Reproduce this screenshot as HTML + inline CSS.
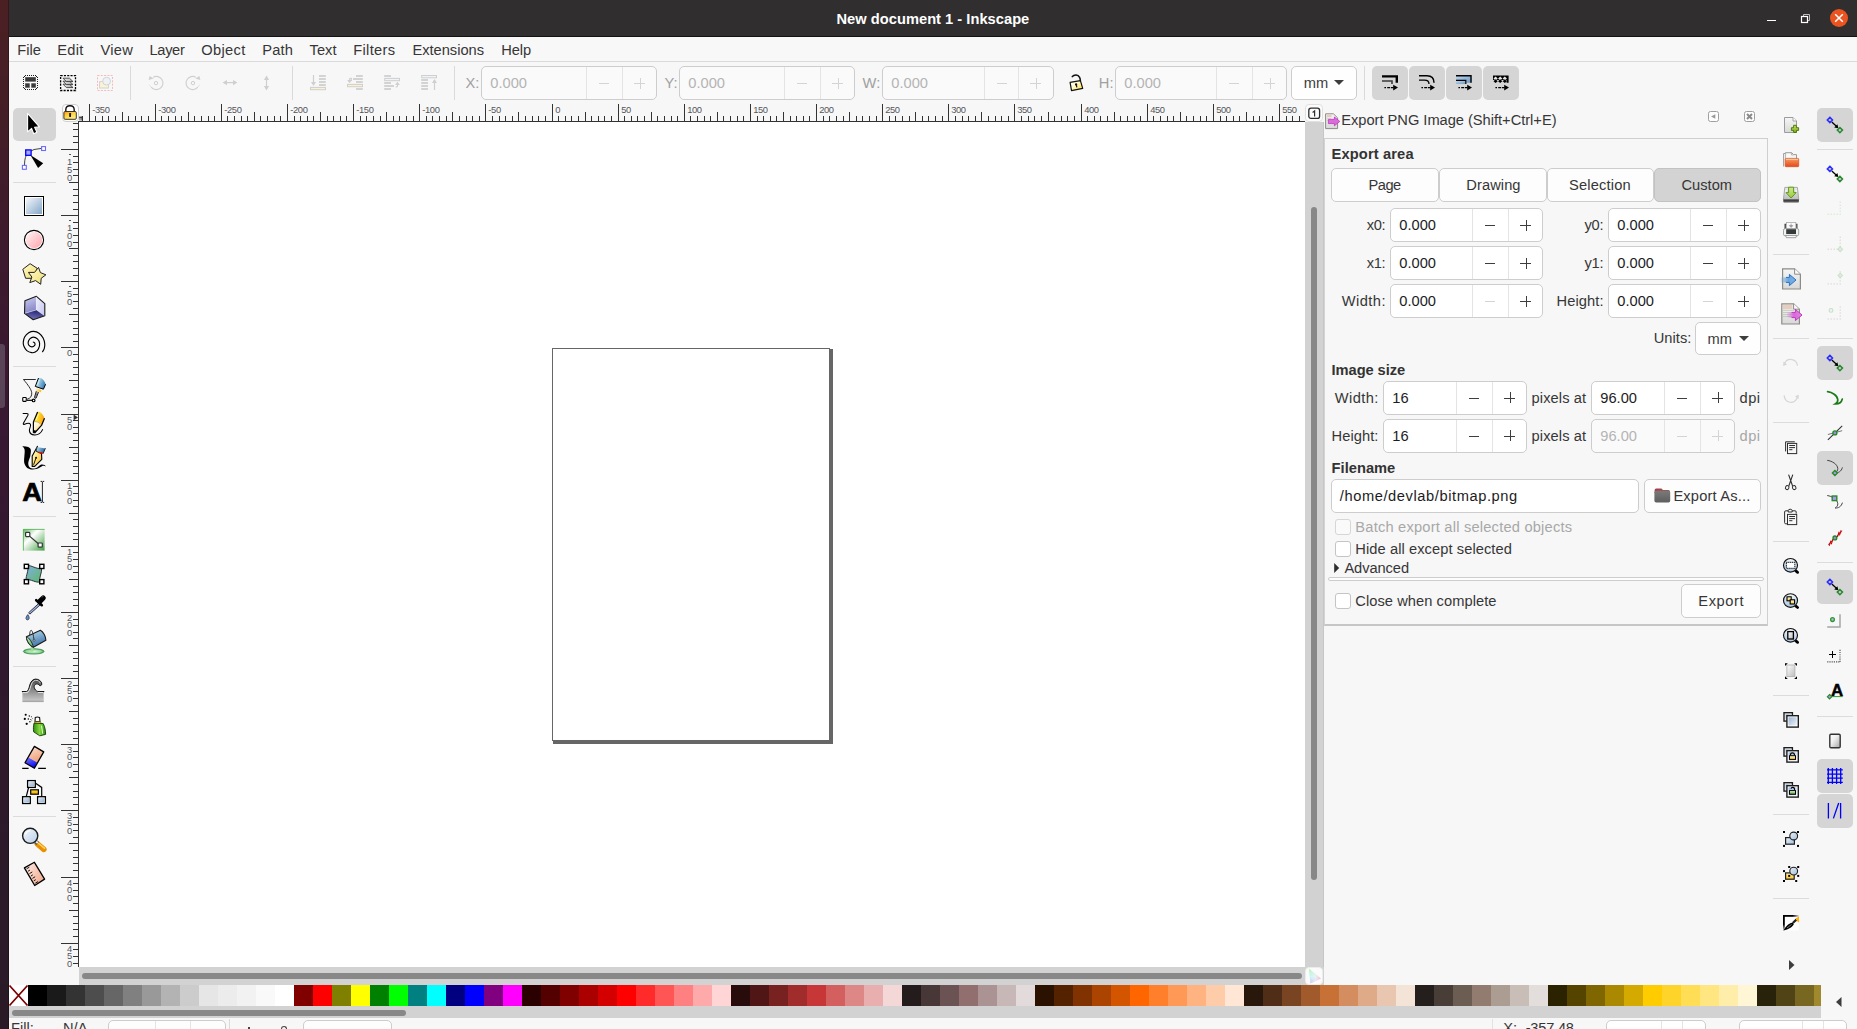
<!DOCTYPE html><html><head><meta charset="utf-8"><title>New document 1 - Inkscape</title><style>
html,body{margin:0;padding:0}
body{width:1857px;height:1029px;position:relative;overflow:hidden;background:#f7f7f7;font-family:"Liberation Sans", sans-serif;color:#363636}
div,svg,span{position:absolute;box-sizing:border-box}
span{white-space:nowrap;display:block}
svg{overflow:visible}
svg text{font-family:"Liberation Sans", sans-serif}
</style></head><body><div style="left:0;top:0;width:1857px;height:1029px;overflow:hidden"><div style="left:0px;top:0px;width:9px;height:1029px;background:linear-gradient(180deg,#4b2023 0px,#451e26 100px,#3d1a2d 250px,#381832 420px,#30182e 650px,#2b1a28 900px,#2a1a26 1029px)"></div><div style="left:8px;top:0px;width:1px;height:1029px;background:rgba(0,0,0,.28)"></div><div style="left:0px;top:344px;width:5px;height:64px;background:#594356;border-radius:0 3px 3px 0"></div><div style="left:9px;top:0px;width:1848px;height:36px;background:#302e2f"></div><div style="left:9px;top:36px;width:1848px;height:1px;background:#141313"></div><span style="top:9.60px;font-size:14.67px;line-height:19px;color:#ffffff;font-weight:700;letter-spacing:0.023px;left:836.50px;">New document 1 - Inkscape</span><div style="left:1767px;top:20px;width:9px;height:1.3px;background:#fff"></div><svg style="left:1798px;top:12px;" width="14" height="12" viewBox="0 0 14 12"><path d="M5.5 4.5V2.5H11.5V8.5H9.5" fill="none" stroke="#bdbdbd" stroke-width="1"/><rect x="3.5" y="4.5" width="6" height="6" fill="none" stroke="#fff" stroke-width="1.2"/></svg><div style="left:1829.8px;top:8.8px;width:18.6px;height:18.6px;background:#e95420;border-radius:50%"></div><svg style="left:1830px;top:9px;" width="18" height="18" viewBox="0 0 18 18"><path d="M5.2 5.2L12.8 12.8M12.8 5.2L5.2 12.8" stroke="#fff" stroke-width="1.5" fill="none"/></svg><div style="left:9px;top:37px;width:1848px;height:25px;background:#f8f8f8;border-bottom:1px solid #dadada"></div><span style="top:41.00px;font-size:14.67px;line-height:19px;color:#363636;letter-spacing:0.044px;left:17.20px;">File</span><span style="top:41.00px;font-size:14.67px;line-height:19px;color:#363636;letter-spacing:0.309px;left:57.20px;">Edit</span><span style="top:41.00px;font-size:14.67px;line-height:19px;color:#363636;letter-spacing:0.246px;left:100.50px;">View</span><span style="top:41.00px;font-size:14.67px;line-height:19px;color:#363636;letter-spacing:-0.374px;left:149.60px;">Layer</span><span style="top:41.00px;font-size:14.67px;line-height:19px;color:#363636;letter-spacing:0.323px;left:201.30px;">Object</span><span style="top:41.00px;font-size:14.67px;line-height:19px;color:#363636;letter-spacing:0.136px;left:262.30px;">Path</span><span style="top:41.00px;font-size:14.67px;line-height:19px;color:#363636;letter-spacing:0.052px;left:309.50px;">Text</span><span style="top:41.00px;font-size:14.67px;line-height:19px;color:#363636;letter-spacing:0.299px;left:353.30px;">Filters</span><span style="top:41.00px;font-size:14.67px;line-height:19px;color:#363636;left:412.40px;">Extensions</span><span style="top:41.00px;font-size:14.67px;line-height:19px;color:#363636;letter-spacing:-0.039px;left:501.20px;">Help</span><div style="left:130px;top:66px;width:1px;height:34px;background:#dadada"></div><div style="left:292px;top:66px;width:1px;height:34px;background:#dadada"></div><div style="left:454px;top:66px;width:1px;height:34px;background:#dadada"></div><div style="left:1364px;top:66px;width:1px;height:34px;background:#dadada"></div><span style="top:74.00px;font-size:14.67px;line-height:19px;color:#a0a0a0;left:465.60px;">X:</span><div style="left:481px;top:66px;width:176px;height:34px;background:#fafafa;border:1px solid #cdcdcd;border-radius:5px"></div><div style="left:586px;top:67px;width:1px;height:32px;background:#e4e4e4"></div><div style="left:622px;top:67px;width:1px;height:32px;background:#e4e4e4"></div><span style="top:74.00px;font-size:14.67px;line-height:19px;color:#b4b4b4;left:490.30px;">0.000</span><div style="left:599px;top:83px;width:10px;height:1px;background:#d4d4d4"></div><div style="left:634px;top:83px;width:11px;height:1px;background:#d4d4d4"></div><div style="left:640px;top:78px;width:1px;height:11px;background:#d4d4d4"></div><span style="top:74.00px;font-size:14.67px;line-height:19px;color:#a0a0a0;left:664.60px;">Y:</span><div style="left:679px;top:66px;width:176px;height:34px;background:#fafafa;border:1px solid #cdcdcd;border-radius:5px"></div><div style="left:784px;top:67px;width:1px;height:32px;background:#e4e4e4"></div><div style="left:820px;top:67px;width:1px;height:32px;background:#e4e4e4"></div><span style="top:74.00px;font-size:14.67px;line-height:19px;color:#b4b4b4;left:688.30px;">0.000</span><div style="left:797px;top:83px;width:10px;height:1px;background:#d4d4d4"></div><div style="left:832px;top:83px;width:11px;height:1px;background:#d4d4d4"></div><div style="left:838px;top:78px;width:1px;height:11px;background:#d4d4d4"></div><span style="top:74.00px;font-size:14.67px;line-height:19px;color:#a0a0a0;left:862.60px;">W:</span><div style="left:882px;top:66px;width:172px;height:34px;background:#fafafa;border:1px solid #cdcdcd;border-radius:5px"></div><div style="left:984px;top:67px;width:1px;height:32px;background:#e4e4e4"></div><div style="left:1018px;top:67px;width:1px;height:32px;background:#e4e4e4"></div><span style="top:74.00px;font-size:14.67px;line-height:19px;color:#b4b4b4;left:891.30px;">0.000</span><div style="left:997px;top:83px;width:10px;height:1px;background:#d4d4d4"></div><div style="left:1030px;top:83px;width:11px;height:1px;background:#d4d4d4"></div><div style="left:1036px;top:78px;width:1px;height:11px;background:#d4d4d4"></div><span style="top:74.00px;font-size:14.67px;line-height:19px;color:#a0a0a0;left:1098.80px;">H:</span><div style="left:1115px;top:66px;width:172px;height:34px;background:#fafafa;border:1px solid #cdcdcd;border-radius:5px"></div><div style="left:1216px;top:67px;width:1px;height:32px;background:#e4e4e4"></div><div style="left:1252px;top:67px;width:1px;height:32px;background:#e4e4e4"></div><span style="top:74.00px;font-size:14.67px;line-height:19px;color:#b4b4b4;left:1124.30px;">0.000</span><div style="left:1229px;top:83px;width:10px;height:1px;background:#d4d4d4"></div><div style="left:1264px;top:83px;width:11px;height:1px;background:#d4d4d4"></div><div style="left:1270px;top:78px;width:1px;height:11px;background:#d4d4d4"></div><div style="left:1291px;top:66px;width:66px;height:34px;background:#fefefe;border:1px solid #cdcdcd;border-radius:5px"></div><span style="top:74.00px;font-size:14.67px;line-height:19px;color:#3d3d3d;left:1303.70px;">mm</span><svg style="left:1334px;top:80px;" width="10" height="5" viewBox="0 0 10 5"><path d="M0 0H10L5 5Z" fill="#3d3d3d"/></svg><div style="left:1372px;top:66px;width:36px;height:34px;background:#d5d5d5;border-radius:5px"></div><div style="left:1409px;top:66px;width:36px;height:34px;background:#d5d5d5;border-radius:5px"></div><div style="left:1446px;top:66px;width:36px;height:34px;background:#d5d5d5;border-radius:5px"></div><div style="left:1483px;top:66px;width:36px;height:34px;background:#d5d5d5;border-radius:5px"></div><div style="left:13px;top:108px;width:43px;height:33px;background:#d5d5d5;border-radius:5px"></div><div style="left:13px;top:182px;width:43px;height:1px;background:#dcdcdc"></div><div style="left:13px;top:366px;width:43px;height:1px;background:#dcdcdc"></div><div style="left:13px;top:516px;width:43px;height:1px;background:#dcdcdc"></div><div style="left:13px;top:666px;width:43px;height:1px;background:#dcdcdc"></div><div style="left:13px;top:816px;width:43px;height:1px;background:#dcdcdc"></div><svg style="left:0px;top:0px;" width="1857" height="130" viewBox="0 0 1857 130"><path d="M82.5 116V121M89.5 104V121M95.5 116V121M102.5 116V121M108.5 116V121M115.5 116V121M122.5 112V121M128.5 116V121M135.5 116V121M141.5 116V121M148.5 116V121M155.5 104V121M161.5 116V121M168.5 116V121M175.5 116V121M181.5 116V121M188.5 112V121M194.5 116V121M201.5 116V121M208.5 116V121M214.5 116V121M221.5 104V121M227.5 116V121M234.5 116V121M241.5 116V121M247.5 116V121M254.5 112V121M260.5 116V121M267.5 116V121M274.5 116V121M280.5 116V121M287.5 104V121M294.5 116V121M300.5 116V121M307.5 116V121M313.5 116V121M320.5 112V121M327.5 116V121M333.5 116V121M340.5 116V121M346.5 116V121M353.5 104V121M360.5 116V121M366.5 116V121M373.5 116V121M380.5 116V121M386.5 112V121M393.5 116V121M399.5 116V121M406.5 116V121M413.5 116V121M419.5 104V121M426.5 116V121M432.5 116V121M439.5 116V121M446.5 116V121M452.5 112V121M459.5 116V121M466.5 116V121M472.5 116V121M479.5 116V121M485.5 104V121M492.5 116V121M499.5 116V121M505.5 116V121M512.5 116V121M518.5 112V121M525.5 116V121M532.5 116V121M538.5 116V121M545.5 116V121M552.5 104V121M558.5 116V121M565.5 116V121M571.5 116V121M578.5 116V121M585.5 112V121M591.5 116V121M598.5 116V121M604.5 116V121M611.5 116V121M618.5 104V121M624.5 116V121M631.5 116V121M637.5 116V121M644.5 116V121M651.5 112V121M657.5 116V121M664.5 116V121M671.5 116V121M677.5 116V121M684.5 104V121M690.5 116V121M697.5 116V121M704.5 116V121M710.5 116V121M717.5 112V121M723.5 116V121M730.5 116V121M737.5 116V121M743.5 116V121M750.5 104V121M757.5 116V121M763.5 116V121M770.5 116V121M776.5 116V121M783.5 112V121M790.5 116V121M796.5 116V121M803.5 116V121M809.5 116V121M816.5 104V121M823.5 116V121M829.5 116V121M836.5 116V121M843.5 116V121M849.5 112V121M856.5 116V121M862.5 116V121M869.5 116V121M876.5 116V121M882.5 104V121M889.5 116V121M895.5 116V121M902.5 116V121M909.5 116V121M915.5 112V121M922.5 116V121M928.5 116V121M935.5 116V121M942.5 116V121M948.5 104V121M955.5 116V121M962.5 116V121M968.5 116V121M975.5 116V121M981.5 112V121M988.5 116V121M995.5 116V121M1001.5 116V121M1008.5 116V121M1014.5 104V121M1021.5 116V121M1028.5 116V121M1034.5 116V121M1041.5 116V121M1048.5 112V121M1054.5 116V121M1061.5 116V121M1067.5 116V121M1074.5 116V121M1081.5 104V121M1087.5 116V121M1094.5 116V121M1100.5 116V121M1107.5 116V121M1114.5 112V121M1120.5 116V121M1127.5 116V121M1134.5 116V121M1140.5 116V121M1147.5 104V121M1153.5 116V121M1160.5 116V121M1167.5 116V121M1173.5 116V121M1180.5 112V121M1186.5 116V121M1193.5 116V121M1200.5 116V121M1206.5 116V121M1213.5 104V121M1220.5 116V121M1226.5 116V121M1233.5 116V121M1239.5 116V121M1246.5 112V121M1253.5 116V121M1259.5 116V121M1266.5 116V121M1272.5 116V121M1279.5 104V121M1286.5 116V121M1292.5 116V121M1299.5 116V121" stroke="#333333" stroke-width="1" fill="none"/></svg><div style="left:79px;top:121px;width:1226px;height:1px;background:#333333"></div><span style="top:104.00px;font-size:9.4px;line-height:12px;color:#53565a;letter-spacing:-0.341px;left:92.20px;">-350</span><span style="top:104.00px;font-size:9.4px;line-height:12px;color:#53565a;letter-spacing:-0.341px;left:158.20px;">-300</span><span style="top:104.00px;font-size:9.4px;line-height:12px;color:#53565a;letter-spacing:-0.341px;left:224.20px;">-250</span><span style="top:104.00px;font-size:9.4px;line-height:12px;color:#53565a;letter-spacing:-0.341px;left:290.20px;">-200</span><span style="top:104.00px;font-size:9.4px;line-height:12px;color:#53565a;letter-spacing:-0.341px;left:356.20px;">-150</span><span style="top:104.00px;font-size:9.4px;line-height:12px;color:#53565a;letter-spacing:-0.341px;left:422.20px;">-100</span><span style="top:104.00px;font-size:9.4px;line-height:12px;color:#53565a;letter-spacing:-0.304px;left:488.20px;">-50</span><span style="top:104.00px;font-size:9.4px;line-height:12px;color:#53565a;left:555.20px;">0</span><span style="top:104.00px;font-size:9.4px;line-height:12px;color:#53565a;letter-spacing:-0.469px;left:621.20px;">50</span><span style="top:104.00px;font-size:9.4px;line-height:12px;color:#53565a;letter-spacing:-0.469px;left:687.20px;">100</span><span style="top:104.00px;font-size:9.4px;line-height:12px;color:#53565a;letter-spacing:-0.469px;left:753.20px;">150</span><span style="top:104.00px;font-size:9.4px;line-height:12px;color:#53565a;letter-spacing:-0.469px;left:819.20px;">200</span><span style="top:104.00px;font-size:9.4px;line-height:12px;color:#53565a;letter-spacing:-0.469px;left:885.20px;">250</span><span style="top:104.00px;font-size:9.4px;line-height:12px;color:#53565a;letter-spacing:-0.469px;left:951.20px;">300</span><span style="top:104.00px;font-size:9.4px;line-height:12px;color:#53565a;letter-spacing:-0.469px;left:1017.20px;">350</span><span style="top:104.00px;font-size:9.4px;line-height:12px;color:#53565a;letter-spacing:-0.469px;left:1084.20px;">400</span><span style="top:104.00px;font-size:9.4px;line-height:12px;color:#53565a;letter-spacing:-0.469px;left:1150.20px;">450</span><span style="top:104.00px;font-size:9.4px;line-height:12px;color:#53565a;letter-spacing:-0.469px;left:1216.20px;">500</span><span style="top:104.00px;font-size:9.4px;line-height:12px;color:#53565a;letter-spacing:-0.469px;left:1282.20px;">550</span><svg style="left:0px;top:0px;" width="90" height="1029" viewBox="0 0 90 1029"><path d="M73 123.5H78M73 129.5H78M73 136.5H78M73 142.5H78M61 149.5H78M73 156.5H78M73 162.5H78M73 169.5H78M73 175.5H78M69 182.5H78M73 189.5H78M73 195.5H78M73 202.5H78M73 209.5H78M61 215.5H78M73 222.5H78M73 228.5H78M73 235.5H78M73 242.5H78M69 248.5H78M73 255.5H78M73 261.5H78M73 268.5H78M73 275.5H78M61 281.5H78M73 288.5H78M73 294.5H78M73 301.5H78M73 308.5H78M69 314.5H78M73 321.5H78M73 328.5H78M73 334.5H78M73 341.5H78M61 347.5H78M73 354.5H78M73 361.5H78M73 367.5H78M73 374.5H78M69 380.5H78M73 387.5H78M73 394.5H78M73 400.5H78M73 407.5H78M61 414.5H78M73 420.5H78M73 427.5H78M73 433.5H78M73 440.5H78M69 447.5H78M73 453.5H78M73 460.5H78M73 466.5H78M73 473.5H78M61 480.5H78M73 486.5H78M73 493.5H78M73 500.5H78M73 506.5H78M69 513.5H78M73 519.5H78M73 526.5H78M73 533.5H78M73 539.5H78M61 546.5H78M73 552.5H78M73 559.5H78M73 566.5H78M73 572.5H78M69 579.5H78M73 586.5H78M73 592.5H78M73 599.5H78M73 605.5H78M61 612.5H78M73 619.5H78M73 625.5H78M73 632.5H78M73 638.5H78M69 645.5H78M73 652.5H78M73 658.5H78M73 665.5H78M73 671.5H78M61 678.5H78M73 685.5H78M73 691.5H78M73 698.5H78M73 705.5H78M69 711.5H78M73 718.5H78M73 724.5H78M73 731.5H78M73 738.5H78M61 744.5H78M73 751.5H78M73 757.5H78M73 764.5H78M73 771.5H78M69 777.5H78M73 784.5H78M73 791.5H78M73 797.5H78M73 804.5H78M61 810.5H78M73 817.5H78M73 824.5H78M73 830.5H78M73 837.5H78M69 843.5H78M73 850.5H78M73 857.5H78M73 863.5H78M73 870.5H78M61 877.5H78M73 883.5H78M73 890.5H78M73 896.5H78M73 903.5H78M69 910.5H78M73 916.5H78M73 923.5H78M73 929.5H78M73 936.5H78M61 943.5H78M73 949.5H78M73 956.5H78M73 963.5H78" stroke="#333333" stroke-width="1" fill="none"/></svg><div style="left:78px;top:121px;width:1px;height:846px;background:#333333"></div><div style="left:68.5px;top:154px;width:2.5px;height:1px;background:#53565a"></div><span style="top:156.40px;font-size:9.4px;line-height:12px;color:#53565a;left:67.00px;">1</span><span style="top:164.00px;font-size:9.4px;line-height:12px;color:#53565a;left:67.00px;">5</span><span style="top:171.60px;font-size:9.4px;line-height:12px;color:#53565a;left:67.00px;">0</span><div style="left:68.5px;top:220px;width:2.5px;height:1px;background:#53565a"></div><span style="top:222.40px;font-size:9.4px;line-height:12px;color:#53565a;left:67.00px;">1</span><span style="top:230.00px;font-size:9.4px;line-height:12px;color:#53565a;left:67.00px;">0</span><span style="top:237.60px;font-size:9.4px;line-height:12px;color:#53565a;left:67.00px;">0</span><div style="left:68.5px;top:286px;width:2.5px;height:1px;background:#53565a"></div><span style="top:288.40px;font-size:9.4px;line-height:12px;color:#53565a;left:67.00px;">5</span><span style="top:296.00px;font-size:9.4px;line-height:12px;color:#53565a;left:67.00px;">0</span><span style="top:346.80px;font-size:9.4px;line-height:12px;color:#53565a;left:67.00px;">0</span><span style="top:413.80px;font-size:9.4px;line-height:12px;color:#53565a;left:67.00px;">5</span><span style="top:421.40px;font-size:9.4px;line-height:12px;color:#53565a;left:67.00px;">0</span><span style="top:479.80px;font-size:9.4px;line-height:12px;color:#53565a;left:67.00px;">1</span><span style="top:487.40px;font-size:9.4px;line-height:12px;color:#53565a;left:67.00px;">0</span><span style="top:495.00px;font-size:9.4px;line-height:12px;color:#53565a;left:67.00px;">0</span><span style="top:545.80px;font-size:9.4px;line-height:12px;color:#53565a;left:67.00px;">1</span><span style="top:553.40px;font-size:9.4px;line-height:12px;color:#53565a;left:67.00px;">5</span><span style="top:561.00px;font-size:9.4px;line-height:12px;color:#53565a;left:67.00px;">0</span><span style="top:611.80px;font-size:9.4px;line-height:12px;color:#53565a;left:67.00px;">2</span><span style="top:619.40px;font-size:9.4px;line-height:12px;color:#53565a;left:67.00px;">0</span><span style="top:627.00px;font-size:9.4px;line-height:12px;color:#53565a;left:67.00px;">0</span><span style="top:677.80px;font-size:9.4px;line-height:12px;color:#53565a;left:67.00px;">2</span><span style="top:685.40px;font-size:9.4px;line-height:12px;color:#53565a;left:67.00px;">5</span><span style="top:693.00px;font-size:9.4px;line-height:12px;color:#53565a;left:67.00px;">0</span><span style="top:743.80px;font-size:9.4px;line-height:12px;color:#53565a;left:67.00px;">3</span><span style="top:751.40px;font-size:9.4px;line-height:12px;color:#53565a;left:67.00px;">0</span><span style="top:759.00px;font-size:9.4px;line-height:12px;color:#53565a;left:67.00px;">0</span><span style="top:809.80px;font-size:9.4px;line-height:12px;color:#53565a;left:67.00px;">3</span><span style="top:817.40px;font-size:9.4px;line-height:12px;color:#53565a;left:67.00px;">5</span><span style="top:825.00px;font-size:9.4px;line-height:12px;color:#53565a;left:67.00px;">0</span><span style="top:876.80px;font-size:9.4px;line-height:12px;color:#53565a;left:67.00px;">4</span><span style="top:884.40px;font-size:9.4px;line-height:12px;color:#53565a;left:67.00px;">0</span><span style="top:892.00px;font-size:9.4px;line-height:12px;color:#53565a;left:67.00px;">0</span><span style="top:942.80px;font-size:9.4px;line-height:12px;color:#53565a;left:67.00px;">4</span><span style="top:950.40px;font-size:9.4px;line-height:12px;color:#53565a;left:67.00px;">5</span><span style="top:958.00px;font-size:9.4px;line-height:12px;color:#53565a;left:67.00px;">0</span><div style="left:61.5px;top:104px;width:17px;height:17.5px;background:#fdfdfd;border:1px solid #d0d0d0;border-radius:4px"></div><div style="left:79px;top:122px;width:1226px;height:845px;background:#fff"></div><div style="left:80px;top:122px;width:1225px;height:845px;background:#fff"></div><div style="left:553px;top:349px;width:280px;height:395px;background:#666"></div><div style="left:552px;top:348px;width:278px;height:393px;background:#fff;border:1px solid #666"></div><div style="left:79px;top:967px;width:1226px;height:18px;background:#d2d2d2"></div><div style="left:82px;top:973px;width:1220px;height:6px;background:#888888;border-radius:3px"></div><div style="left:1305px;top:122px;width:19px;height:845px;background:#d2d2d2;border-right:1px solid #c6c6c6"></div><div style="left:1311px;top:207px;width:6px;height:673px;background:#888888;border-radius:3px"></div><div style="left:1305px;top:104px;width:18px;height:18px;background:#fcfcfc;border:1px solid #e0e0e0;border-radius:4px"></div><svg style="left:1308px;top:107px;" width="13" height="13" viewBox="0 0 13 13"><rect x="0.8" y="1.2" width="10.8" height="10.2" rx="2.2" fill="none" stroke="#2e2e2e" stroke-width="1.3"/><path d="M4.6 5.4L6.6 4V9.4" fill="none" stroke="#2e2e2e" stroke-width="1.2"/></svg><div style="left:1305px;top:967px;width:19px;height:18px;background:#d2d2d2"></div><div style="left:1305px;top:967px;width:18px;height:18px;background:#fbfbfb;border:1px solid #ececec;border-radius:4px"></div><svg style="left:1305px;top:967px" width="18" height="18" viewBox="0 0 18 18"><defs><linearGradient id="cmA" x1="0" y1="0" x2="0" y2="1"><stop offset="0" stop-color="#b4f4b4"/><stop offset=".55" stop-color="#c4f4f0"/><stop offset="1" stop-color="#c8b8f8"/></linearGradient><linearGradient id="cmB" x1="0" y1="0" x2="1" y2="0"><stop offset="0" stop-color="#ffffff" stop-opacity="0"/><stop offset=".55" stop-color="#fff0f8" stop-opacity=".6"/><stop offset="1" stop-color="#ffb0c8"/></linearGradient></defs><path d="M3.9 1.6L15.8 11.4L5.4 16.6Z" fill="url(#cmA)"/><path d="M3.9 1.6L15.8 11.4L5.4 16.6Z" fill="url(#cmB)"/></svg><div style="left:9px;top:985px;width:1812px;height:21px;background:#fff"></div><svg style="left:9px;top:985px;" width="19" height="21" viewBox="0 0 19 21"><path d="M0.5 0.5L18.5 20.5M18.5 0.5L0.5 20.5" stroke="#800000" stroke-width="1.8" fill="none"/></svg><div style="left:28px;top:985px;width:1793px;height:21px;"><div style="left:0px;top:0;width:19px;height:21px;background:#000000"></div><div style="left:19px;top:0;width:19px;height:21px;background:#1a1a1a"></div><div style="left:38px;top:0;width:19px;height:21px;background:#333333"></div><div style="left:57px;top:0;width:19px;height:21px;background:#4d4d4d"></div><div style="left:76px;top:0;width:19px;height:21px;background:#666666"></div><div style="left:95px;top:0;width:19px;height:21px;background:#808080"></div><div style="left:114px;top:0;width:19px;height:21px;background:#999999"></div><div style="left:133px;top:0;width:19px;height:21px;background:#b3b3b3"></div><div style="left:152px;top:0;width:19px;height:21px;background:#cccccc"></div><div style="left:171px;top:0;width:19px;height:21px;background:#e6e6e6"></div><div style="left:190px;top:0;width:19px;height:21px;background:#ececec"></div><div style="left:209px;top:0;width:19px;height:21px;background:#f2f2f2"></div><div style="left:228px;top:0;width:19px;height:21px;background:#f9f9f9"></div><div style="left:247px;top:0;width:19px;height:21px;background:#ffffff"></div><div style="left:266px;top:0;width:19px;height:21px;background:#800000"></div><div style="left:285px;top:0;width:19px;height:21px;background:#ff0000"></div><div style="left:304px;top:0;width:19px;height:21px;background:#808000"></div><div style="left:323px;top:0;width:19px;height:21px;background:#ffff00"></div><div style="left:342px;top:0;width:19px;height:21px;background:#008000"></div><div style="left:361px;top:0;width:19px;height:21px;background:#00ff00"></div><div style="left:380px;top:0;width:19px;height:21px;background:#008080"></div><div style="left:399px;top:0;width:19px;height:21px;background:#00ffff"></div><div style="left:418px;top:0;width:19px;height:21px;background:#000080"></div><div style="left:437px;top:0;width:19px;height:21px;background:#0000ff"></div><div style="left:456px;top:0;width:19px;height:21px;background:#800080"></div><div style="left:475px;top:0;width:19px;height:21px;background:#ff00ff"></div><div style="left:494px;top:0;width:19px;height:21px;background:#2b0000"></div><div style="left:513px;top:0;width:19px;height:21px;background:#550000"></div><div style="left:532px;top:0;width:19px;height:21px;background:#800000"></div><div style="left:551px;top:0;width:19px;height:21px;background:#aa0000"></div><div style="left:570px;top:0;width:19px;height:21px;background:#d40000"></div><div style="left:589px;top:0;width:19px;height:21px;background:#ff0000"></div><div style="left:608px;top:0;width:19px;height:21px;background:#ff2a2a"></div><div style="left:627px;top:0;width:19px;height:21px;background:#ff5555"></div><div style="left:646px;top:0;width:19px;height:21px;background:#ff8080"></div><div style="left:665px;top:0;width:19px;height:21px;background:#ffaaaa"></div><div style="left:684px;top:0;width:19px;height:21px;background:#ffd5d5"></div><div style="left:703px;top:0;width:19px;height:21px;background:#280b0b"></div><div style="left:722px;top:0;width:19px;height:21px;background:#501616"></div><div style="left:741px;top:0;width:19px;height:21px;background:#782121"></div><div style="left:760px;top:0;width:19px;height:21px;background:#a02c2c"></div><div style="left:779px;top:0;width:19px;height:21px;background:#c83737"></div><div style="left:798px;top:0;width:19px;height:21px;background:#d35f5f"></div><div style="left:817px;top:0;width:19px;height:21px;background:#de8787"></div><div style="left:836px;top:0;width:19px;height:21px;background:#e9afaf"></div><div style="left:855px;top:0;width:19px;height:21px;background:#f4d7d7"></div><div style="left:874px;top:0;width:19px;height:21px;background:#241c1c"></div><div style="left:893px;top:0;width:19px;height:21px;background:#483737"></div><div style="left:912px;top:0;width:19px;height:21px;background:#6c5353"></div><div style="left:931px;top:0;width:19px;height:21px;background:#916f6f"></div><div style="left:950px;top:0;width:19px;height:21px;background:#ac9393"></div><div style="left:969px;top:0;width:19px;height:21px;background:#c8b7b7"></div><div style="left:988px;top:0;width:19px;height:21px;background:#e3dbdb"></div><div style="left:1007px;top:0;width:19px;height:21px;background:#2b1100"></div><div style="left:1026px;top:0;width:19px;height:21px;background:#552200"></div><div style="left:1045px;top:0;width:19px;height:21px;background:#803300"></div><div style="left:1064px;top:0;width:19px;height:21px;background:#aa4400"></div><div style="left:1083px;top:0;width:19px;height:21px;background:#d45500"></div><div style="left:1102px;top:0;width:19px;height:21px;background:#ff6600"></div><div style="left:1121px;top:0;width:19px;height:21px;background:#ff7f2a"></div><div style="left:1140px;top:0;width:19px;height:21px;background:#ff9955"></div><div style="left:1159px;top:0;width:19px;height:21px;background:#ffb380"></div><div style="left:1178px;top:0;width:19px;height:21px;background:#ffccaa"></div><div style="left:1197px;top:0;width:19px;height:21px;background:#ffe6d5"></div><div style="left:1216px;top:0;width:19px;height:21px;background:#28170b"></div><div style="left:1235px;top:0;width:19px;height:21px;background:#502d16"></div><div style="left:1254px;top:0;width:19px;height:21px;background:#784421"></div><div style="left:1273px;top:0;width:19px;height:21px;background:#a05a2c"></div><div style="left:1292px;top:0;width:19px;height:21px;background:#c87137"></div><div style="left:1311px;top:0;width:19px;height:21px;background:#d38d5f"></div><div style="left:1330px;top:0;width:19px;height:21px;background:#deaa87"></div><div style="left:1349px;top:0;width:19px;height:21px;background:#e9c6af"></div><div style="left:1368px;top:0;width:19px;height:21px;background:#f4e3d7"></div><div style="left:1387px;top:0;width:19px;height:21px;background:#241f1c"></div><div style="left:1406px;top:0;width:19px;height:21px;background:#483e37"></div><div style="left:1425px;top:0;width:19px;height:21px;background:#6c5d53"></div><div style="left:1444px;top:0;width:19px;height:21px;background:#917c6f"></div><div style="left:1463px;top:0;width:19px;height:21px;background:#ac9d93"></div><div style="left:1482px;top:0;width:19px;height:21px;background:#c8beb7"></div><div style="left:1501px;top:0;width:19px;height:21px;background:#e3dedb"></div><div style="left:1520px;top:0;width:19px;height:21px;background:#2b2200"></div><div style="left:1539px;top:0;width:19px;height:21px;background:#554400"></div><div style="left:1558px;top:0;width:19px;height:21px;background:#806600"></div><div style="left:1577px;top:0;width:19px;height:21px;background:#aa8800"></div><div style="left:1596px;top:0;width:19px;height:21px;background:#d4aa00"></div><div style="left:1615px;top:0;width:19px;height:21px;background:#ffcc00"></div><div style="left:1634px;top:0;width:19px;height:21px;background:#ffd42a"></div><div style="left:1653px;top:0;width:19px;height:21px;background:#ffdd55"></div><div style="left:1672px;top:0;width:19px;height:21px;background:#ffe680"></div><div style="left:1691px;top:0;width:19px;height:21px;background:#ffeeaa"></div><div style="left:1710px;top:0;width:19px;height:21px;background:#fff6d5"></div><div style="left:1729px;top:0;width:19px;height:21px;background:#28220b"></div><div style="left:1748px;top:0;width:19px;height:21px;background:#504416"></div><div style="left:1767px;top:0;width:19px;height:21px;background:#786721"></div><div style="left:1786px;top:0;width:7px;height:21px;background:#a0892c"></div></div><div style="left:9px;top:1006px;width:1812px;height:12px;background:#d2d2d2"></div><div style="left:12px;top:1010px;width:394px;height:6px;background:#888888;border-radius:3px"></div><svg style="left:1836px;top:997px;" width="6" height="10" viewBox="0 0 6 10"><path d="M5.5 0V10L0 5Z" fill="#3d3d3d"/></svg><div style="left:9px;top:1018px;width:1848px;height:11px;background:#f7f7f7"></div><div style="left:1492px;top:1019px;width:1px;height:10px;background:#e2e2e2"></div><span style="top:1018.50px;font-size:14.67px;line-height:19px;color:#363636;left:11.00px;">Fill:</span><span style="top:1018.50px;font-size:14.67px;line-height:19px;color:#363636;left:63.00px;">N/A</span><div style="left:108px;top:1020px;width:118px;height:20px;background:#fdfdfd;border:1px solid #cdcdcd;border-radius:5px"></div><div style="left:155px;top:1021px;width:1px;height:10px;background:#e4e4e4"></div><div style="left:190px;top:1021px;width:1px;height:10px;background:#e4e4e4"></div><div style="left:229px;top:1019px;width:1px;height:10px;background:#dadada"></div><div style="left:302.5px;top:1020px;width:89px;height:20px;background:#fdfdfd;border:1px solid #cdcdcd;border-radius:5px"></div><div style="left:248px;top:1027px;width:2px;height:2px;background:#444"></div><div style="left:281px;top:1026px;width:6px;height:3px;border:1.2px solid #444;border-bottom:none;border-radius:3px 3px 0 0"></div><span style="top:1019.20px;font-size:14.67px;line-height:19px;color:#363636;left:1503.30px;">X:</span><span style="top:1019.20px;font-size:14.67px;line-height:19px;color:#363636;letter-spacing:-0.231px;left:1525.70px;">-357.48</span><div style="left:1606px;top:1019.5px;width:99.5px;height:20px;background:#fefefe;border:1px solid #cdcdcd;border-radius:5px"></div><div style="left:1661px;top:1020.5px;width:1px;height:10px;background:#e4e4e4"></div><div style="left:1682px;top:1020.5px;width:1px;height:10px;background:#e4e4e4"></div><div style="left:1739px;top:1019.5px;width:107.5px;height:20px;background:#fefefe;border:1px solid #cdcdcd;border-radius:5px"></div><div style="left:1802px;top:1020.5px;width:1px;height:10px;background:#e4e4e4"></div><div style="left:1823px;top:1020.5px;width:1px;height:10px;background:#e4e4e4"></div><span style="top:111.40px;font-size:14.67px;line-height:19px;color:#363636;letter-spacing:-0.021px;left:1341.30px;">Export PNG Image (Shift+Ctrl+E)</span><div style="left:1708px;top:111px;width:11px;height:11px;background:#fdfdfd;border:1px solid #9f9f9f;border-radius:2.5px"></div><svg style="left:1708px;top:111px;" width="11" height="11" viewBox="0 0 11 11"><path d="M7.3 3.2V7.8L3 5.5Z" fill="#9a9a9a"/></svg><div style="left:1744px;top:111px;width:11px;height:11px;background:#fdfdfd;border:1px solid #9f9f9f;border-radius:2.5px"></div><svg style="left:1744px;top:111px;" width="11" height="11" viewBox="0 0 11 11"><path d="M3 3L8 8M8 3L3 8" stroke="#8a8a8a" stroke-width="2" fill="none"/></svg><div style="left:1324px;top:138px;width:444px;height:488px;border:1px solid #cfcfcf;border-bottom:2px solid #c6c6c6;border-left:1px solid #d4d4d4"></div><span style="top:144.90px;font-size:14.67px;line-height:19px;color:#333;font-weight:700;letter-spacing:0.131px;left:1331.60px;">Export area</span><div style="left:1331px;top:168px;width:108px;height:34px;background:#fdfdfd;border:1px solid #cdcdcd;border-radius:5px"></div><span style="top:176.00px;font-size:14.67px;line-height:19px;color:#363636;letter-spacing:-0.459px;left:1368.40px;">Page</span><div style="left:1439px;top:168px;width:108px;height:34px;background:#fdfdfd;border:1px solid #cdcdcd;border-radius:5px"></div><span style="top:176.00px;font-size:14.67px;line-height:19px;color:#363636;letter-spacing:0.076px;left:1466.30px;">Drawing</span><div style="left:1547px;top:168px;width:107px;height:34px;background:#fdfdfd;border:1px solid #cdcdcd;border-radius:5px"></div><span style="top:176.00px;font-size:14.67px;line-height:19px;color:#363636;letter-spacing:0.167px;left:1569.00px;">Selection</span><div style="left:1654px;top:168px;width:107px;height:34px;background:#d3d3d3;border:1px solid #c2c2c2;border-radius:5px"></div><span style="top:176.00px;font-size:14.67px;line-height:19px;color:#363636;left:1681.50px;">Custom</span><span style="top:216.00px;font-size:14.67px;line-height:19px;color:#363636;letter-spacing:-0.421px;right:471.92px;">x0:</span><div style="left:1390px;top:208px;width:153px;height:34px;background:#ffffff;border:1px solid #cdcdcd;border-radius:5px"></div><div style="left:1472px;top:209px;width:1px;height:32px;background:#e4e4e4"></div><div style="left:1508px;top:209px;width:1px;height:32px;background:#e4e4e4"></div><span style="top:216.00px;font-size:14.67px;line-height:19px;color:#1c1c1c;left:1399.30px;">0.000</span><div style="left:1485px;top:225px;width:10px;height:1px;background:#3d3d3d"></div><div style="left:1520px;top:225px;width:11px;height:1px;background:#3d3d3d"></div><div style="left:1526px;top:220px;width:1px;height:11px;background:#3d3d3d"></div><span style="top:216.00px;font-size:14.67px;line-height:19px;color:#363636;letter-spacing:-0.321px;right:253.82px;">y0:</span><div style="left:1608px;top:208px;width:153px;height:34px;background:#ffffff;border:1px solid #cdcdcd;border-radius:5px"></div><div style="left:1690px;top:209px;width:1px;height:32px;background:#e4e4e4"></div><div style="left:1726px;top:209px;width:1px;height:32px;background:#e4e4e4"></div><span style="top:216.00px;font-size:14.67px;line-height:19px;color:#1c1c1c;left:1617.30px;">0.000</span><div style="left:1703px;top:225px;width:10px;height:1px;background:#3d3d3d"></div><div style="left:1738px;top:225px;width:11px;height:1px;background:#3d3d3d"></div><div style="left:1744px;top:220px;width:1px;height:11px;background:#3d3d3d"></div><span style="top:254.00px;font-size:14.67px;line-height:19px;color:#363636;letter-spacing:-0.421px;right:471.92px;">x1:</span><div style="left:1390px;top:246px;width:153px;height:34px;background:#ffffff;border:1px solid #cdcdcd;border-radius:5px"></div><div style="left:1472px;top:247px;width:1px;height:32px;background:#e4e4e4"></div><div style="left:1508px;top:247px;width:1px;height:32px;background:#e4e4e4"></div><span style="top:254.00px;font-size:14.67px;line-height:19px;color:#1c1c1c;left:1399.30px;">0.000</span><div style="left:1485px;top:263px;width:10px;height:1px;background:#3d3d3d"></div><div style="left:1520px;top:263px;width:11px;height:1px;background:#3d3d3d"></div><div style="left:1526px;top:258px;width:1px;height:11px;background:#3d3d3d"></div><span style="top:254.00px;font-size:14.67px;line-height:19px;color:#363636;letter-spacing:-0.321px;right:253.82px;">y1:</span><div style="left:1608px;top:246px;width:153px;height:34px;background:#ffffff;border:1px solid #cdcdcd;border-radius:5px"></div><div style="left:1690px;top:247px;width:1px;height:32px;background:#e4e4e4"></div><div style="left:1726px;top:247px;width:1px;height:32px;background:#e4e4e4"></div><span style="top:254.00px;font-size:14.67px;line-height:19px;color:#1c1c1c;left:1617.30px;">0.000</span><div style="left:1703px;top:263px;width:10px;height:1px;background:#3d3d3d"></div><div style="left:1738px;top:263px;width:11px;height:1px;background:#3d3d3d"></div><div style="left:1744px;top:258px;width:1px;height:11px;background:#3d3d3d"></div><span style="top:292.00px;font-size:14.67px;line-height:19px;color:#363636;letter-spacing:0.442px;right:471.06px;">Width:</span><div style="left:1390px;top:284px;width:153px;height:34px;background:#ffffff;border:1px solid #cdcdcd;border-radius:5px"></div><div style="left:1472px;top:285px;width:1px;height:32px;background:#e4e4e4"></div><div style="left:1508px;top:285px;width:1px;height:32px;background:#e4e4e4"></div><span style="top:292.00px;font-size:14.67px;line-height:19px;color:#1c1c1c;left:1399.30px;">0.000</span><div style="left:1485px;top:301px;width:10px;height:1px;background:#d4d4d4"></div><div style="left:1520px;top:301px;width:11px;height:1px;background:#3d3d3d"></div><div style="left:1526px;top:296px;width:1px;height:11px;background:#3d3d3d"></div><span style="top:292.00px;font-size:14.67px;line-height:19px;color:#363636;letter-spacing:0.092px;right:253.41px;">Height:</span><div style="left:1608px;top:284px;width:153px;height:34px;background:#ffffff;border:1px solid #cdcdcd;border-radius:5px"></div><div style="left:1690px;top:285px;width:1px;height:32px;background:#e4e4e4"></div><div style="left:1726px;top:285px;width:1px;height:32px;background:#e4e4e4"></div><span style="top:292.00px;font-size:14.67px;line-height:19px;color:#1c1c1c;left:1617.30px;">0.000</span><div style="left:1703px;top:301px;width:10px;height:1px;background:#d4d4d4"></div><div style="left:1738px;top:301px;width:11px;height:1px;background:#3d3d3d"></div><div style="left:1744px;top:296px;width:1px;height:11px;background:#3d3d3d"></div><span style="top:329.00px;font-size:14.67px;line-height:19px;color:#363636;letter-spacing:0.055px;right:165.54px;">Units:</span><div style="left:1695px;top:322px;width:66px;height:33px;background:#fefefe;border:1px solid #cdcdcd;border-radius:5px"></div><span style="top:329.50px;font-size:14.67px;line-height:19px;color:#3d3d3d;left:1707.60px;">mm</span><svg style="left:1738.5px;top:336px;" width="10" height="5" viewBox="0 0 10 5"><path d="M0 0H10L5 5Z" fill="#3d3d3d"/></svg><span style="top:361.00px;font-size:14.67px;line-height:19px;color:#333;font-weight:700;letter-spacing:-0.074px;left:1331.60px;">Image size</span><span style="top:389.00px;font-size:14.67px;line-height:19px;color:#363636;letter-spacing:0.426px;right:478.17px;">Width:</span><div style="left:1383px;top:381px;width:144px;height:34px;background:#ffffff;border:1px solid #cdcdcd;border-radius:5px"></div><div style="left:1456px;top:382px;width:1px;height:32px;background:#e4e4e4"></div><div style="left:1492px;top:382px;width:1px;height:32px;background:#e4e4e4"></div><span style="top:389.00px;font-size:14.67px;line-height:19px;color:#1c1c1c;left:1392.30px;">16</span><div style="left:1469px;top:398px;width:10px;height:1px;background:#3d3d3d"></div><div style="left:1504px;top:398px;width:11px;height:1px;background:#3d3d3d"></div><div style="left:1510px;top:392px;width:1px;height:11px;background:#3d3d3d"></div><span style="top:389.00px;font-size:14.67px;line-height:19px;color:#363636;letter-spacing:0.113px;left:1531.50px;">pixels at</span><div style="left:1591px;top:381px;width:144px;height:34px;background:#ffffff;border:1px solid #cdcdcd;border-radius:5px"></div><div style="left:1664px;top:382px;width:1px;height:32px;background:#e4e4e4"></div><div style="left:1700px;top:382px;width:1px;height:32px;background:#e4e4e4"></div><span style="top:389.00px;font-size:14.67px;line-height:19px;color:#1c1c1c;left:1600.30px;">96.00</span><div style="left:1677px;top:398px;width:10px;height:1px;background:#3d3d3d"></div><div style="left:1712px;top:398px;width:11px;height:1px;background:#3d3d3d"></div><div style="left:1718px;top:392px;width:1px;height:11px;background:#3d3d3d"></div><span style="top:389.00px;font-size:14.67px;line-height:19px;color:#363636;letter-spacing:0.479px;left:1739.50px;">dpi</span><span style="top:427.00px;font-size:14.67px;line-height:19px;color:#363636;letter-spacing:0.064px;right:478.54px;">Height:</span><div style="left:1383px;top:419px;width:144px;height:34px;background:#ffffff;border:1px solid #cdcdcd;border-radius:5px"></div><div style="left:1456px;top:420px;width:1px;height:32px;background:#e4e4e4"></div><div style="left:1492px;top:420px;width:1px;height:32px;background:#e4e4e4"></div><span style="top:427.00px;font-size:14.67px;line-height:19px;color:#1c1c1c;left:1392.30px;">16</span><div style="left:1469px;top:436px;width:10px;height:1px;background:#3d3d3d"></div><div style="left:1504px;top:436px;width:11px;height:1px;background:#3d3d3d"></div><div style="left:1510px;top:430px;width:1px;height:11px;background:#3d3d3d"></div><span style="top:427.00px;font-size:14.67px;line-height:19px;color:#363636;letter-spacing:0.113px;left:1531.50px;">pixels at</span><div style="left:1591px;top:419px;width:144px;height:34px;background:#fafafa;border:1px solid #cdcdcd;border-radius:5px"></div><div style="left:1664px;top:420px;width:1px;height:32px;background:#e4e4e4"></div><div style="left:1700px;top:420px;width:1px;height:32px;background:#e4e4e4"></div><span style="top:427.00px;font-size:14.67px;line-height:19px;color:#b4b4b4;left:1600.30px;">96.00</span><div style="left:1677px;top:436px;width:10px;height:1px;background:#d4d4d4"></div><div style="left:1712px;top:436px;width:11px;height:1px;background:#d4d4d4"></div><div style="left:1718px;top:430px;width:1px;height:11px;background:#d4d4d4"></div><span style="top:427.00px;font-size:14.67px;line-height:19px;color:#a6a6a6;letter-spacing:0.479px;left:1739.50px;">dpi</span><span style="top:458.80px;font-size:14.67px;line-height:19px;color:#333;font-weight:700;letter-spacing:0.019px;left:1331.60px;">Filename</span><div style="left:1331px;top:479px;width:307.5px;height:34px;background:#fff;border:1px solid #cdcdcd;border-radius:5px"></div><span style="top:487.00px;font-size:14.67px;line-height:19px;color:#1c1c1c;letter-spacing:0.583px;left:1339.80px;">/home/devlab/bitmap.png</span><div style="left:1644px;top:479px;width:117px;height:34px;background:#fdfdfd;border:1px solid #cdcdcd;border-radius:5px"></div><span style="top:487.00px;font-size:14.67px;line-height:19px;color:#363636;letter-spacing:0.171px;left:1673.40px;">Export As...</span><div style="left:1335px;top:519px;width:16px;height:16px;background:#fafafa;border:1px solid #d6d6d6;border-radius:3px"></div><span style="top:517.60px;font-size:14.67px;line-height:19px;color:#a8a8a8;letter-spacing:0.206px;left:1355.30px;">Batch export all selected objects</span><div style="left:1335px;top:541px;width:16px;height:16px;background:#fff;border:1px solid #c4c4c4;border-radius:3px"></div><span style="top:539.60px;font-size:14.67px;line-height:19px;color:#363636;letter-spacing:0.079px;left:1355.30px;">Hide all except selected</span><svg style="left:1334px;top:563px;" width="6" height="10" viewBox="0 0 6 10"><path d="M0.2 0V10L5.2 5Z" fill="#2e2e2e"/></svg><span style="top:559.40px;font-size:14.67px;line-height:19px;color:#363636;letter-spacing:-0.073px;left:1344.40px;">Advanced</span><div style="left:1328px;top:577px;width:436px;height:4px;background:#fdfdfd;border:1px solid #cdcdcd;border-radius:2px"></div><div style="left:1335px;top:593px;width:16px;height:16px;background:#fff;border:1px solid #c4c4c4;border-radius:3px"></div><span style="top:591.70px;font-size:14.67px;line-height:19px;color:#363636;letter-spacing:0.057px;left:1355.30px;">Close when complete</span><div style="left:1681px;top:584px;width:80px;height:34px;background:#fdfdfd;border:1px solid #cdcdcd;border-radius:5px"></div><span style="top:592.00px;font-size:14.67px;line-height:19px;color:#363636;letter-spacing:0.590px;left:1698.30px;">Export</span><div style="left:1773px;top:254px;width:36px;height:1px;background:#dcdcdc"></div><div style="left:1773px;top:338px;width:36px;height:1px;background:#dcdcdc"></div><div style="left:1773px;top:422px;width:36px;height:1px;background:#dcdcdc"></div><div style="left:1773px;top:541px;width:36px;height:1px;background:#dcdcdc"></div><div style="left:1773px;top:695px;width:36px;height:1px;background:#dcdcdc"></div><div style="left:1773px;top:814px;width:36px;height:1px;background:#dcdcdc"></div><div style="left:1773px;top:898px;width:36px;height:1px;background:#dcdcdc"></div><div style="left:1817px;top:149px;width:36px;height:1px;background:#dcdcdc"></div><div style="left:1817px;top:338px;width:36px;height:1px;background:#dcdcdc"></div><div style="left:1817px;top:562px;width:36px;height:1px;background:#dcdcdc"></div><div style="left:1817px;top:716px;width:36px;height:1px;background:#dcdcdc"></div><div style="left:1817px;top:108px;width:36px;height:34px;background:#d5d5d5;border-radius:5px"></div><div style="left:1817px;top:346px;width:36px;height:34px;background:#d5d5d5;border-radius:5px"></div><div style="left:1817px;top:451px;width:36px;height:34px;background:#d5d5d5;border-radius:5px"></div><div style="left:1817px;top:570px;width:36px;height:34px;background:#d5d5d5;border-radius:5px"></div><div style="left:1817px;top:759px;width:36px;height:34px;background:#d5d5d5;border-radius:5px"></div><div style="left:1817px;top:794px;width:36px;height:34px;background:#d5d5d5;border-radius:5px"></div><svg style="left:1789px;top:960px;" width="6" height="10" viewBox="0 0 6 10"><path d="M0 0V10L5.5 5Z" fill="#3d3d3d"/></svg><svg style="left:23px;top:75px;" width="16" height="16" viewBox="0 0 16 16"><g fill="#1a1a1a"><rect x="2" y="0" width="1" height="1"/><rect x="2" y="14" width="1" height="1"/><rect x="0" y="2" width="1" height="1"/><rect x="14" y="2" width="1" height="1"/><rect x="4" y="0" width="1" height="1"/><rect x="4" y="14" width="1" height="1"/><rect x="0" y="4" width="1" height="1"/><rect x="14" y="4" width="1" height="1"/><rect x="6" y="0" width="1" height="1"/><rect x="6" y="14" width="1" height="1"/><rect x="0" y="6" width="1" height="1"/><rect x="14" y="6" width="1" height="1"/><rect x="8" y="0" width="1" height="1"/><rect x="8" y="14" width="1" height="1"/><rect x="0" y="8" width="1" height="1"/><rect x="14" y="8" width="1" height="1"/><rect x="10" y="0" width="1" height="1"/><rect x="10" y="14" width="1" height="1"/><rect x="0" y="10" width="1" height="1"/><rect x="14" y="10" width="1" height="1"/><rect x="12" y="0" width="1" height="1"/><rect x="12" y="14" width="1" height="1"/><rect x="0" y="12" width="1" height="1"/><rect x="14" y="12" width="1" height="1"/><rect x="1" y="1" width="1" height="1"/><rect x="13" y="1" width="1" height="1"/><rect x="1" y="13" width="1" height="1"/><rect x="13" y="13" width="1" height="1"/></g><rect x="2.2" y="2.2" width="10.6" height="4.4" fill="#3a3a3a"/><rect x="2.2" y="8.3" width="4.5" height="4.4" fill="#3a3a3a"/><rect x="8.3" y="8.3" width="4.5" height="4.4" fill="#3a3a3a"/></svg><svg style="left:60px;top:75px;" width="16" height="16" viewBox="0 0 16 16"><rect x="0.6" y="0.6" width="14.9" height="14.9" fill="none" stroke="#000" stroke-width="1.3" stroke-dasharray="2.1 1.2"/><path d="M3 9.2H9.5L13 12.6H6.4Z" fill="url(#gLay)" stroke="#3a3a3a" stroke-width="0.9"/><path d="M3 6.2H9.5L13 9.6H6.4Z" fill="url(#gLay)" stroke="#3a3a3a" stroke-width="0.9"/><path d="M3 3.2H9.5L13 6.6H6.4Z" fill="url(#gLay)" stroke="#3a3a3a" stroke-width="0.9"/></svg><svg style="left:97px;top:75px;" width="16" height="16" viewBox="0 0 16 16"><rect x="0.5" y="0.5" width="15" height="15" fill="none" stroke="#f3bcbc" stroke-width="1" stroke-dasharray="2 1.3"/><rect x="2.6" y="6.6" width="8.8" height="6.4" fill="#fbf3d4" stroke="#d2d2d2" stroke-width="1"/><circle cx="9.6" cy="6.2" r="3.9" fill="#eef1f5" stroke="#d4d4d4" stroke-width="1"/></svg><svg style="left:148px;top:75px;" width="16" height="16" viewBox="0 0 16 16"><path d="M5.2 2.2A6.6 6.6 0 1 1 3.2 12.2" fill="none" stroke="#cfcfcf" stroke-width="1.1"/><path d="M3.2 12.2A6.6 6.6 0 0 1 1.6 9.8" fill="none" stroke="#cfcfcf" stroke-width="1" stroke-dasharray="1 1.2"/><path d="M0.6 4.9L1.6 0.9L5.6 3.4Z" fill="#cfcfcf"/><circle cx="8" cy="8.1" r="1.7" fill="none" stroke="#cfcfcf" stroke-width="1"/></svg><svg style="left:185px;top:75px;" width="16" height="16" viewBox="0 0 16 16"><g transform="translate(16,0) scale(-1,1)"><path d="M5.2 2.2A6.6 6.6 0 1 1 3.2 12.2" fill="none" stroke="#cfcfcf" stroke-width="1.1"/><path d="M3.2 12.2A6.6 6.6 0 0 1 1.6 9.8" fill="none" stroke="#cfcfcf" stroke-width="1" stroke-dasharray="1 1.2"/><path d="M0.6 4.9L1.6 0.9L5.6 3.4Z" fill="#cfcfcf"/><circle cx="8" cy="8.1" r="1.7" fill="none" stroke="#cfcfcf" stroke-width="1"/></g></svg><svg style="left:222px;top:75px;" width="16" height="16" viewBox="0 0 16 16"><path d="M3 7.6H13" stroke="#cfcfcf" stroke-width="1.2"/><path d="M0.6 7.6L5 5V10.2ZM15.4 7.6L11 5V10.2Z" fill="#cfcfcf"/></svg><svg style="left:259px;top:75px;" width="16" height="16" viewBox="0 0 16 16"><path d="M7.5 3V13" stroke="#cfcfcf" stroke-width="1.2"/><path d="M7.5 0.6L4.9 5H10.1ZM7.5 15.4L4.9 11H10.1Z" fill="#cfcfcf"/></svg><svg style="left:310px;top:75px;" width="16" height="16" viewBox="0 0 16 16"><rect x="9" y="0.1" width="6.8" height="1.8" fill="#cfcfcf"/><rect x="9" y="3.1" width="6.8" height="1.8" fill="#cfcfcf"/><rect x="9" y="6.1" width="6.8" height="1.8" fill="#cfcfcf"/><rect x="9" y="9.1" width="6.8" height="1.8" fill="#cfcfcf"/><rect x="0.5" y="12.4" width="15" height="2.3" fill="#fbf1d0" stroke="#cfcfcf" stroke-width="1"/><path d="M3.5 0V8" stroke="#cfcfcf" stroke-width="1.2"/><path d="M3.5 11L1 7H6Z" fill="#cfcfcf"/></svg><svg style="left:347px;top:75px;" width="16" height="16" viewBox="0 0 16 16"><rect x="9" y="0.1" width="6.8" height="1.8" fill="#cfcfcf"/><rect x="6" y="3.1" width="9.8" height="1.8" fill="#cfcfcf"/><rect x="9" y="6.1" width="6.8" height="1.8" fill="#cfcfcf"/><rect x="9" y="13.1" width="6.8" height="1.8" fill="#cfcfcf"/><rect x="0.5" y="9.4" width="15" height="2.3" fill="#fbf1d0" stroke="#cfcfcf" stroke-width="1"/><path d="M4.3 3V6" stroke="#cfcfcf" stroke-width="1.2" fill="none"/><path d="M2.5 8.2L0.2 5H4.9Z" fill="#cfcfcf"/><path d="M2.6 5.5V4Q2.6 3.2 3.6 3.2H4.4" stroke="#cfcfcf" stroke-width="1.1" fill="none"/></svg><svg style="left:384px;top:75px;" width="16" height="16" viewBox="0 0 16 16"><rect x="0.2" y="0.1" width="6.8" height="1.8" fill="#cfcfcf"/><rect x="0.2" y="7.1" width="6.8" height="1.8" fill="#cfcfcf"/><rect x="0.2" y="10.1" width="9.8" height="1.8" fill="#cfcfcf"/><rect x="0.2" y="13.1" width="6.8" height="1.8" fill="#cfcfcf"/><rect x="0.7" y="3.4" width="14.8" height="2.3" fill="#eef4fb" stroke="#cfcfcf" stroke-width="1"/><path d="M13.5 6.8L15.8 10H11.1Z" fill="#cfcfcf"/><path d="M13.5 9.5V11Q13.5 11.9 12.5 11.9H11.8" stroke="#cfcfcf" stroke-width="1.1" fill="none"/></svg><svg style="left:421px;top:75px;" width="16" height="16" viewBox="0 0 16 16"><rect x="0.2" y="4.1" width="6.8" height="1.8" fill="#cfcfcf"/><rect x="0.2" y="7.1" width="6.8" height="1.8" fill="#cfcfcf"/><rect x="0.2" y="10.1" width="6.8" height="1.8" fill="#cfcfcf"/><rect x="0.2" y="13.1" width="6.8" height="1.8" fill="#cfcfcf"/><rect x="0.7" y="0.5" width="14.8" height="2.3" fill="#eef4fb" stroke="#cfcfcf" stroke-width="1"/><path d="M13.5 7V15" stroke="#cfcfcf" stroke-width="1.2"/><path d="M13.5 4L11 8H16Z" fill="#cfcfcf"/></svg><svg style="left:1060px;top:68px;" width="35" height="30" viewBox="0 0 35 30"><path d="M20.4 12.9C20.2 11 19.9 10 19.6 9.4C18.6 7.4 17.2 6.9 15.8 7C14.4 7.1 13.2 7.6 12.3 8.6" fill="none" stroke="#111" stroke-width="1.5" stroke-linecap="round"/><path d="M10.1 14.3L20.4 12.7L22.7 20.4L11.5 22.7Z" fill="url(#gLockY)" stroke="#111" stroke-width="1.2" stroke-linejoin="round"/><circle cx="16.1" cy="16.5" r="1.15" fill="#111"/><path d="M15.7 16.6L17 16.4L17.4 19.2L16.2 19.4Z" fill="#111"/></svg><svg style="left:1382px;top:75px;" width="16" height="16" viewBox="0 0 16 16"><path d="M0 1.4H14.8V7.7" fill="none" stroke="#000" stroke-width="2.4"/><path d="M0 6H10V9" fill="none" stroke="#3a3a3a" stroke-width="1.6"/><path d="M2.4 12.6H4M5.2 12.6H8M8.8 12.6H11.6" stroke="#000" stroke-width="1.2"/><path d="M11.2 9.8L16 12.6L11.2 15.6Z" fill="#000"/></svg><svg style="left:1419px;top:75px;" width="16" height="16" viewBox="0 0 16 16"><path d="M0 0.8H8Q15 0.8 15 7.8" fill="none" stroke="#000" stroke-width="1.5"/><path d="M0 5.2H5.5Q10 5.2 10 9" fill="none" stroke="#000" stroke-width="1.3"/><path d="M2.4 12.6H4M5.2 12.6H8M8.8 12.6H11.6" stroke="#000" stroke-width="1.2"/><path d="M11.2 9.8L16 12.6L11.2 15.6Z" fill="#000"/></svg><svg style="left:1456px;top:75px;" width="16" height="16" viewBox="0 0 16 16"><path d="M0 0.5H15.4V7.7H10.2V4.9H0Z" fill="url(#gT3)"/><path d="M0 5.9H9.2V9H0Z" fill="url(#gT3)"/><path d="M0 0.8H15V7.7" fill="none" stroke="#000" stroke-width="1.4"/><path d="M0 5.4H9.8V9" fill="none" stroke="#000" stroke-width="1.2"/><path d="M2.4 12.6H4M5.2 12.6H8M8.8 12.6H11.6" stroke="#000" stroke-width="1.2"/><path d="M11.2 9.8L16 12.6L11.2 15.6Z" fill="#000"/></svg><svg style="left:1493px;top:75px;" width="16" height="16" viewBox="0 0 16 16"><path d="M0 0.4H15.6V7.8H13.6V5H0Z" fill="#000"/><path d="M2.6 1.6L4.7 3.6L2.6 5.6L0.5 3.6Z" fill="#e8e8e8"/><path d="M2.6 4.3L4.7 6.2L2.6 8.1L0.5 6.2Z" fill="#000"/><path d="M7.199999999999999 1.6L9.299999999999999 3.6L7.199999999999999 5.6L5.1 3.6Z" fill="#e8e8e8"/><path d="M7.199999999999999 4.3L9.299999999999999 6.2L7.199999999999999 8.1L5.1 6.2Z" fill="#000"/><path d="M11.799999999999999 1.6L13.899999999999999 3.6L11.799999999999999 5.6L9.7 3.6Z" fill="#e8e8e8"/><path d="M11.799999999999999 4.3L13.899999999999999 6.2L11.799999999999999 8.1L9.7 6.2Z" fill="#000"/><path d="M2.4 12.6H4M5.2 12.6H8M8.8 12.6H11.6" stroke="#000" stroke-width="1.2"/><path d="M11.2 9.8L16 12.6L11.2 15.6Z" fill="#000"/></svg><svg style="left:0px;top:0px;" width="100" height="1029" viewBox="0 0 100 1029"><path d="M27.6 113.3V131.8L31.6 128.4L33.7 133.7L36.9 132.3L34.6 127.2L39.4 126.9Z" fill="#000" stroke="#fff" stroke-width="1.1" stroke-linejoin="round"/><path d="M24.5 165Q24.5 156 28.3 152.5M28.3 152.5Q33 148.6 41.5 148.4" fill="none" stroke="#444" stroke-width="1"/><rect x="25.7" y="149.9" width="5.4" height="5.4" fill="#a4a4f0" stroke="#0000ff" stroke-width="1.3"/><rect x="41.6" y="146.6" width="3.9" height="3.9" fill="#fff" stroke="#6a6aff" stroke-width="1.1"/><rect x="22.4" y="165.4" width="3.9" height="3.9" fill="#fff" stroke="#6a6aff" stroke-width="1.1"/><path d="M30.4 154.9L43.2 163.3L38.1 168.1Z" fill="#000"/><rect x="24.5" y="196.5" width="19" height="19" fill="#fff" stroke="#000" stroke-width="1"/><rect x="26" y="198" width="16" height="16" fill="url(#gRect)"/><circle cx="34" cy="240" r="9.6" fill="#fff" stroke="#000" stroke-width="1.1"/><circle cx="34" cy="240" r="8.2" fill="url(#gEll)"/><path d="M30.1 263.7L37.2 268.3L34.6 278.3H25.6L22.8 269.3Z" fill="url(#gStar)" stroke="#222" stroke-width="1"/><path d="M38.5 267.4L40.4 272.6L45.9 274.8L41.2 278.3L40.7 284.3L35.6 280.6L29.8 282.6L31.9 277L28.4 272.4L34.5 272.4Z" fill="url(#gStar)" stroke="#222" stroke-width="1"/><path d="M36.4 296.3L24.9 300.8L24.5 313.4L36.4 309.9Z" fill="url(#gBoxL)"/><path d="M36.4 296.3L44.8 303.6V315.8L36.4 309.9Z" fill="url(#gBoxR)"/><path d="M36.4 309.9L44.8 315.8L33.2 319.7L24.5 313.4Z" fill="url(#gBoxB)"/><path d="M36.4 296.3L44.8 303.6V315.8L33.2 319.7L24.5 313.4L24.9 300.8Z" fill="none" stroke="#1c1c1c" stroke-width="1.1" stroke-linejoin="round"/><path d="M36.4 296.8V309.9L44.4 315.5M36.4 309.9L25 313.2" fill="none" stroke="#fff" stroke-opacity=".55" stroke-width=".8"/><path d="M33.33 342.15C33.58 342.33 34.60 342.70 34.83 343.24C35.06 343.78 35.17 344.80 34.69 345.41C34.21 346.02 32.92 346.91 31.97 346.91C31.02 346.91 29.62 346.16 28.98 345.41C28.34 344.66 28.02 343.51 28.16 342.42C28.30 341.33 28.94 339.76 29.80 338.88C30.66 338.00 32.06 337.12 33.33 337.12C34.60 337.12 36.37 337.86 37.41 338.88C38.45 339.90 39.41 341.61 39.59 343.24C39.77 344.87 39.23 347.23 38.50 348.68C37.77 350.13 36.37 351.29 35.24 351.95C34.11 352.61 33.11 352.86 31.70 352.63C30.29 352.40 28.12 351.70 26.80 350.59C25.48 349.48 24.40 347.37 23.81 345.96C23.22 344.55 23.13 343.65 23.27 342.15C23.41 340.65 23.72 338.55 24.63 336.98C25.54 335.42 27.21 333.69 28.71 332.76C30.21 331.83 31.89 331.33 33.61 331.40C35.33 331.47 37.46 332.06 39.05 333.17C40.64 334.28 42.18 336.26 43.13 338.07C44.08 339.88 44.58 342.28 44.76 344.05C44.94 345.82 44.58 347.41 44.22 348.68C43.86 349.95 42.86 351.17 42.59 351.67" fill="none" stroke="#000" stroke-width="1.15" stroke-linecap="round"/><path d="M23.3 379.5H35.8" stroke="#222" stroke-width=".95" fill="none"/><path d="M23.6 379.7C26 382.4 27.6 384.6 29 386.7C30.4 388.8 31.4 390.6 31.7 392.7C31.9 394.2 31.6 395.6 30.9 396.8C30.2 397.8 29.2 398.4 28.2 398.7C27.6 398.9 27.2 399.2 26.9 399.6" stroke="#222" stroke-width=".95" fill="none"/><path d="M26.8 400.3H32.2" stroke="#000" stroke-width="1.2"/><rect x="22.75" y="397.55" width="3.5" height="3.8" rx=".6" fill="#fff" stroke="#000" stroke-width="1.1"/><circle cx="33.6" cy="400.4" r="1.35" fill="#fff" stroke="#000" stroke-width="1.2"/><path d="M38.5 378Q40.2 377.6 41.8 378.5C43.6 379.8 45 382 45.6 384.2L43.4 389.2L35.4 386.8Z" fill="url(#gPenB)"/><path d="M39.6 379.6L37.4 385.6" stroke="#fff" stroke-opacity=".6" stroke-width=".9"/><path d="M38.5 378L35.3 386.4L43.4 389.2L45.6 384.3" fill="none" stroke="#000" stroke-width="1" stroke-linejoin="round"/><path d="M36 388L41.5 390L40.8 392.2L35.7 390.9Z" fill="url(#gPenY)"/><path d="M36.3 391.2L34.5 397.4Q35 398.6 36.1 398.1L38.5 392.2" fill="#e4e4e4" stroke="#000" stroke-width=".9" stroke-linejoin="round"/><path d="M37.4 391.8L35.4 397.8" stroke="#333" stroke-width=".6"/><path d="M23.1 413.4H26.6C28.2 413.4 28.4 414.4 27.8 415.6L23.4 423.2C23 424.2 23.6 424.6 24.6 424.2C26.4 423.4 29.4 422.6 30.4 424.2C31.4 426 29.2 428.4 29.4 430.6C29.6 433 31.6 434.8 34.6 434.9C38.4 435 41.2 432.6 42.6 429.6" fill="none" stroke="#000" stroke-width="1.05" stroke-linecap="round"/><path d="M37.4 412.1Q38.6 411.4 39.8 412C42 413.4 43.8 415.8 44.5 418.3L41.5 425.4C40.4 422.8 36.6 420.8 33.4 421.9Z" fill="url(#gPcl)"/><path d="M38.6 413.6L36 420" stroke="#fff" stroke-opacity=".75" stroke-width="1"/><path d="M33.4 421.9C36.6 420.8 40.4 422.8 41.5 425.4L36.4 430.8L33.4 430.2Z" fill="url(#gPclW)"/><path d="M33.3 430L36.5 430.7L34.2 433.4L33.2 432.9Z" fill="#000"/><path d="M37.6 412L33.4 422V432.8M44.5 418.3L41.5 425.4L34.6 433" fill="none" stroke="#000" stroke-width="1.2" stroke-linejoin="round"/><path d="M33.6 422C36.6 420.9 40.2 422.8 41.3 425.2" fill="none" stroke="#7a5000" stroke-opacity=".6" stroke-width=".7"/><path d="M22.2 446.3C24.4 446.2 26.6 446.4 28.2 447.1C30 447.9 31 449.2 30.9 450.8C30.8 452.6 30.6 454.4 30.3 456.1C29.9 458.2 28.8 460 28.4 462C28.1 463.6 28.3 465.2 29 466.4C29.6 467.4 30.4 468 31.4 468.3C33 468.7 34.8 468.6 36.3 468C38.2 467.2 39.2 465.6 40.7 464.8C41.9 464.2 43.3 464.4 44.5 465C45.2 465.4 45.6 465.9 45.9 466.4C44.6 465.8 43.2 465.6 42 466.2C40.2 467.1 38.8 468.6 36.3 469.1C34.6 469.5 32.6 469.7 30.9 469.4C29 469 27.4 468.2 26.3 466.9C25.1 465.5 24.3 463.8 24.1 462C23.9 460.2 24.2 458.4 24.35 456.6C24.5 454.4 24.9 452 24.6 449.8C24.4 448.4 23.4 447.2 22.2 446.3Z" fill="#000"/><path d="M37.4 446.4L32.2 456.1V466.4H34.7L41.8 459.3L41.5 453.6L36.4 451.2Z" fill="url(#gNib)" stroke="#000" stroke-width="1.1" stroke-linejoin="round"/><circle cx="36.05" cy="457.8" r=".95" fill="#000"/><path d="M35.9 458.2L33.6 464.8" stroke="#000" stroke-width=".9"/><path d="M36.9 447.1L45.3 448.4L43.7 452.2L36.3 451.2Z" fill="url(#gHold)"/><path d="M38.5 451.5L43.3 452.2L42.6 454L38.5 453.1Z" fill="#dc1414"/><path d="M45.4 448.2L43 453.8" stroke="#1a2a3a" stroke-width="1"/><path d="M37.4 446.4L36 450.8" stroke="#333" stroke-width=".8"/><text x="22.3" y="500.9" font-size="26" font-weight="700" fill="#000" stroke="#000" stroke-width=".7" textLength="19.6" lengthAdjust="spacingAndGlyphs">A</text><path d="M40.6 481.4H42M42.8 481.4H44.2M42.4 481.6V502.2M40.6 502.4H42M42.8 502.4H44.2" stroke="#222" stroke-width="1" fill="none"/><rect x="23" y="529" width="21.6" height="21.6" fill="url(#gGrad)"/><path d="M23.4 550.6V529.4H44.6" fill="none" stroke="#5ab55a" stroke-width=".9"/><path d="M27.7 534.6L40.2 545.2" stroke="#333" stroke-width="1.2"/><rect x="25.6" y="532.4" width="4.2" height="4.2" rx=".8" fill="#fff" stroke="#333" stroke-width="1.2"/><rect x="38.1" y="543" width="4.2" height="4.2" rx=".8" fill="#fff" stroke="#333" stroke-width="1.2"/><path d="M27.4 565.8C31 564.6 36.5 569.8 41.6 568.2C42.2 573 38.6 577.2 40 581.8C36 583.4 31 578.6 26.2 580C25.6 575.2 29.2 571 27.4 565.8Z" fill="url(#gMesh)" stroke="#333" stroke-width="1"/><rect x="24.3" y="564.3" width="4.2" height="4.2" fill="#fff" stroke="#000" stroke-width="1.4"/><rect x="39.7" y="564.3" width="4.2" height="4.2" fill="#fff" stroke="#000" stroke-width="1.4"/><rect x="24.3" y="579.6" width="4.2" height="4.2" fill="#fff" stroke="#000" stroke-width="1.4"/><rect x="39.7" y="579.6" width="4.2" height="4.2" fill="#fff" stroke="#000" stroke-width="1.4"/><path d="M38.6 603.6L28.6 612.7L29.9 614.1L40 605Z" fill="url(#gDrop)" stroke="#223" stroke-width=".9"/><path d="M36.2 600.2L41.8 605.2" stroke="#000" stroke-width="2.6" stroke-linecap="round"/><path d="M39.6 601.6L43.2 598" stroke="#000" stroke-width="5.2" stroke-linecap="round"/><path d="M42 597.2L43.4 596" stroke="#555" stroke-width="1" stroke-linecap="round"/><path d="M27.8 614.6C29 616.2 29.4 617.6 29 618.8C28.6 619.9 27.3 620.2 26.5 619.5C25.6 618.7 25.9 616.8 27.8 614.6Z" fill="#5c90d4" stroke="#334" stroke-width=".8"/><ellipse cx="33.7" cy="651.4" rx="10.4" ry="2.7" fill="url(#gPud)" stroke="#2f7f3f" stroke-width=".7"/><path d="M30.5 645.5C31.5 647.5 30.6 650 30.2 651.5H33.6C33.4 650 33 648 33.6 646.6Z" fill="#9adc9a"/><path d="M26.4 636.8L40.4 630.2C43.5 632 45.8 636.5 45.9 640.2L33.4 647.2C29.5 645.5 26.6 641 26.4 636.8Z" fill="url(#gBuck)" stroke="#1c1c1c" stroke-width="1.1" stroke-linejoin="round"/><path d="M26.4 636.8C28.6 637 32.6 642.5 33.4 647.2C29.6 645.6 26.6 641 26.4 636.8Z" fill="url(#gGreen)" stroke="#1c1c1c" stroke-width=".9"/><path d="M29.6 635.2C29.8 632 30.4 630.2 31.2 630.3C32.4 630.5 33.4 635 34 640" fill="none" stroke="#333" stroke-width="1"/><circle cx="34.1" cy="640.3" r="1" fill="#ddd" stroke="#333" stroke-width=".7"/><path d="M22.3 691.5H26.6C28.2 691.2 29 688 29.8 685C30.6 682.2 32.4 679.2 35.4 679.1C38 679 40.6 680.4 41.6 683C42.2 684.8 41.2 685.8 40.1 685.6C39 685.4 38.8 684.6 38.2 684.2C37.4 683.7 36.6 683.7 35.8 684.1C34.4 684.9 33.9 686.2 34.3 687.6C34.8 689.4 36 691 37.8 691.5H43.9V701.8H22.3Z" fill="url(#gTwk)"/><path d="M23 692.6H27C29 692.2 29.9 689 30.8 686C31.6 683.4 33 680.5 35.5 680.3C37.6 680.2 39.6 681.2 40.5 683.2M35.4 687.4C35.9 689 36.8 690.2 38.2 692.5H43.2" fill="none" stroke="#fff" stroke-opacity=".85" stroke-width=".9"/><path d="M22.3 691.5H26.6C28.2 691.2 29 688 29.8 685C30.6 682.2 32.4 679.2 35.4 679.1C38 679 40.6 680.4 41.6 683C42.2 684.8 41.2 685.8 40.1 685.6C39 685.4 38.8 684.6 38.2 684.2C37.4 683.7 36.6 683.7 35.8 684.1C34.4 684.9 33.9 686.2 34.3 687.6C34.8 689.4 36 691 37.8 691.5H43.9" fill="none" stroke="#151515" stroke-width="1" stroke-linecap="round"/><path d="M22.6 701.6H43.7" stroke="#a2a2a2" stroke-width=".9"/><path d="M22.7 693V701.4M43.5 693V701.4" stroke="#d8d8d8" stroke-opacity=".7" stroke-width=".8"/><path d="M35.3 717.4Q37.5 716.4 39.6 717.6L40 721.6H35Z" fill="#fff" stroke="#111" stroke-width="1.1"/><path d="M34.9 721.8H40.8L41.2 723.4H34.3Z" fill="url(#gSprY)" stroke="#7a5a00" stroke-width=".4"/><path d="M34 723.2L43.2 723.6C45 727 45.6 731 45.6 734.4L39.8 735.8L33.6 731.8C33.2 728.6 33.4 725.8 34 723.2Z" fill="url(#gSpr)" stroke="#123c08" stroke-width=".9"/><path d="M41.6 726L42.6 733.2" stroke="#e8ffd8" stroke-width="1" stroke-linecap="round"/><circle cx="25.7" cy="714.8" r="1.05" fill="#000"/><circle cx="24.8" cy="718.9" r="1.1" fill="#000"/><circle cx="26.7" cy="723.8" r="1.15" fill="#000"/><circle cx="29.3" cy="716" r="0.7" fill="#000"/><circle cx="28.3" cy="719" r="0.75" fill="#000"/><circle cx="29.9" cy="721.8" r="0.7" fill="#000"/><circle cx="31.4" cy="716.8" r="0.5" fill="#000"/><circle cx="30.8" cy="719.4" r="0.5" fill="#000"/><circle cx="32.6" cy="718.4" r="0.4" fill="#000"/><circle cx="31.8" cy="720.8" r="0.4" fill="#000"/><path d="M34.4 746.4L43.7 751.9L37.2 762.5L28.6 757.6Z" fill="url(#gErP)"/><path d="M28.6 757.6L37.2 762.5L34.4 768.2L25 762.8Z" fill="url(#gErB)"/><path d="M34.4 746.4L43.7 751.9L34.4 768.2L25 762.8Z" fill="none" stroke="#000" stroke-width="1.3" stroke-linejoin="round"/><path d="M22.2 768.4H28.6M38.2 768.4H45.9" stroke="#000" stroke-width="1.3"/><path d="M35.6 783.3L41.7 787.4V796.3M28.6 787.5L26.3 796.3" fill="none" stroke="#000" stroke-width="1.2"/><rect x="27.6" y="780.6" width="7.7" height="6.8" fill="#fff" stroke="#000" stroke-width="1.3"/><rect x="28.900000000000002" y="781.9" width="5.1" height="4.199999999999999" fill="url(#gCon)"/><rect x="22.6" y="796.7" width="7.7" height="6.8" fill="#fff" stroke="#000" stroke-width="1.3"/><rect x="23.900000000000002" y="798.0" width="5.1" height="4.199999999999999" fill="url(#gCon)"/><rect x="37.6" y="796.7" width="7.8" height="6.8" fill="#fff" stroke="#000" stroke-width="1.3"/><rect x="38.9" y="798.0" width="5.199999999999999" height="4.199999999999999" fill="url(#gCon)"/><rect x="30.7" y="789.8" width="7.7" height="4.4" fill="url(#gConY)" stroke="#000" stroke-width="1.2"/><path d="M37.4 843.8L43.8 849.4" stroke="#e89000" stroke-width="5.6" stroke-linecap="round"/><path d="M38.6 843.4L44.6 848.4" stroke="#ffd060" stroke-width="1.4" stroke-linecap="round"/><path d="M35.4 841.6L37.6 843.6" stroke="#555" stroke-width="4" /><path d="M35.8 841.2L37.8 843" stroke="#eee" stroke-width="2" /><circle cx="30.2" cy="835.8" r="7.6" fill="url(#gLens)" stroke="#1c1c1c" stroke-width="1.4"/><path d="M25.4 834.6A5.2 5.2 0 0 1 30 830.8" fill="none" stroke="#fff" stroke-width="1.2" stroke-opacity=".9"/><path d="M34.4 862.3L44.6 879.1L34.7 885.5L24.4 867.9Z" fill="url(#gMeas)" stroke="#000" stroke-width="1.3" stroke-linejoin="round"/><path d="M26.60 868.80l2.75 -1.66M28.05 871.20l1.89 -1.14M29.50 873.60l2.75 -1.66M30.95 876.00l1.89 -1.14M32.40 878.40l2.75 -1.66M33.85 880.80l1.89 -1.14M35.30 883.20l2.75 -1.66" stroke="#000" stroke-width=".9" fill="none"/><path d="M65.8 112V109.8Q65.8 105.8 70 105.8Q74.2 105.8 74.2 109.8V112" fill="#fff" stroke="#111" stroke-width="1.4"/><rect x="63.9" y="111.5" width="12.4" height="7.8" rx="1.2" fill="url(#gLk)" stroke="#3c3428" stroke-width="1"/><circle cx="70.1" cy="114.1" r="1.15" fill="#111"/><rect x="69.2" y="115" width="1.8" height="1.9" fill="#111"/><path d="M79.2 117.6H82.6M80 116.2V120.5M81.8 116.2V120.5" stroke="#333" stroke-width=".9" fill="none"/><path d="M73.6 414.6L78 417.4L73.6 420.2Z" fill="#333"/></svg><svg style="left:1770px;top:0px;" width="87" height="1029" viewBox="1770 0 87 1029"><path d="M1784.5 117.5H1793L1796.5 121V132.5H1784.5Z" fill="url(#gPage)" stroke="#9c9c9c" stroke-width="1"/><path d="M1793 117.5V121H1796.5" fill="#fff" stroke="#9c9c9c" stroke-width=".9"/><path d="M1793.6 125.3H1796.4V127.7H1798.6V130.4H1796.4V132.5H1793.6V130.4H1791.4V127.7H1793.6Z" fill="url(#gPlus)" stroke="#4e7c10" stroke-width="1" stroke-linejoin="round"/><path d="M1783.6 166.5V153.5H1785.6V152.6H1791.6L1793.6 154.6H1796.5V159" fill="#f4f4f4" stroke="#9c9c9c" stroke-width="1"/><path d="M1785.6 158.5V152.8H1791.4V155H1793.6" fill="#fafafa" stroke="#a4a4a4" stroke-width=".8"/><rect x="1785.2" y="158.4" width="13.5" height="8.3" rx=".8" fill="url(#gOpen)" stroke="#d8501e" stroke-width=".7"/><path d="M1786 159.4H1798" stroke="#fcd8b8" stroke-width=".8"/><path d="M1784.8 187.4H1797.4L1798.8 199.6H1783.4Z" fill="url(#gDrive)" stroke="#a0a0a0" stroke-width=".9"/><path d="M1783.3 199.5H1798.9V201.8Q1798.9 202.8 1797.9 202.8H1784.3Q1783.3 202.8 1783.3 201.8Z" fill="url(#gDrvF)"/><path d="M1786 190V192.5M1796.2 190V192.5" stroke="#fff" stroke-width=".9"/><path d="M1788.6 187.2H1793.6V192.6H1796.2L1791.1 198L1786 192.6H1788.6Z" fill="url(#gSavA)" stroke="#5c9c20" stroke-width="1" stroke-linejoin="round"/><path d="M1785.2 229V224.4H1786.4M1796.8 229V224.4H1795.6" fill="none" stroke="#444" stroke-width="1.4"/><rect x="1786.4" y="222.5" width="9.4" height="6.8" fill="#fafafa" stroke="#aaa" stroke-width=".8"/><path d="M1791.1 223.6V226M1789.4 225.6L1791.1 227.4L1792.8 225.6Z" stroke="#999" fill="#999" stroke-width=".8"/><rect x="1783.5" y="228.6" width="15.2" height="7.2" rx="1.6" fill="#f2f2f2" stroke="#999" stroke-width=".9"/><rect x="1786.2" y="229.2" width="9.8" height="4.8" fill="#363a3a"/><path d="M1785.6 235.4H1796.6L1795.8 237.7H1786.4Z" fill="#fafafa" stroke="#8a8a8a" stroke-width=".8"/><path d="M1782.6 268.8H1794.6L1800.4 274.2V289H1782.6Z" fill="url(#gPage)" stroke="#8c8c86" stroke-width="1.2"/><path d="M1794.6 268.8V274.2H1800.4" fill="#fbfbfb" stroke="#8c8c86" stroke-width="1"/><path d="M1780.6 277.4H1789.4V274.4L1796 280L1789.4 285.6V282.4H1780.6Z" fill="url(#gFadeB)"/><path d="M1786 277.4H1789.4V274.4L1796 280L1789.4 285.6V282.4H1786" fill="none" stroke="#2c70c0" stroke-width="1" stroke-linejoin="round"/><path d="M1781.8 303.8H1793.6L1799.4 309.2V324H1781.8Z" fill="url(#gPage)" stroke="#8c8c86" stroke-width="1.2"/><path d="M1793.6 303.8V309.2H1799.4" fill="#fbfbfb" stroke="#8c8c86" stroke-width="1"/><rect x="1783" y="305" width="9.4" height="4" fill="#e8cdbe"/><path d="M1783 310.3H1794M1783 312.5H1794M1783 314.5H1794M1783 316.5H1794" stroke="#b8c4b4" stroke-width=".8"/><path d="M1787 312.4H1795.4V309.4L1802 315L1795.4 320.6V317.6H1787Z" fill="url(#gFadeM)"/><path d="M1791.6 312.4H1795.4V309.4L1802 315L1795.4 320.6V317.6H1791.6" fill="none" stroke="#c234c2" stroke-width="1" stroke-linejoin="round"/><path d="M1797.4 365.8A6.7 6.7 0 0 0 1784.6 363.4" fill="none" stroke="#d6d6d6" stroke-width="1.2"/><path d="M1783.1 365.9L1783.5 361.4L1787 364.4Z" fill="#d6d6d6"/><path d="M1784.2 395.2A6.7 6.7 0 0 0 1797.4 397.2" fill="none" stroke="#d6d6d6" stroke-width="1.2"/><path d="M1798.9 394.8L1798.5 399.3L1795 396.3Z" fill="#d6d6d6"/><path d="M1785.6 451.4V441.8H1794.8" fill="none" stroke="#2e2e2e" stroke-width="1"/><rect x="1787.5" y="443.4" width="9.2" height="10.2" fill="none" stroke="#2e2e2e" stroke-width="1"/><path d="M1789.2 445.5H1795M1789.2 447.6H1795M1789.2 449.7H1792.4" stroke="#2e2e2e" stroke-width="1"/><path d="M1788.6 474.6L1792.6 486M1792.8 474.6L1788.8 486" stroke="#2e2e2e" stroke-width="1.1" fill="none"/><ellipse cx="1787.2" cy="487.6" rx="1.7" ry="2" transform="rotate(30 1787.2 487.6)" fill="#f6f6f6" stroke="#2e2e2e" stroke-width="1"/><ellipse cx="1794.2" cy="487.6" rx="1.7" ry="2" transform="rotate(-30 1794.2 487.6)" fill="#f6f6f6" stroke="#2e2e2e" stroke-width="1"/><path d="M1788.2 510.8H1785.8Q1784.6 510.8 1784.6 512V522.6Q1784.6 523.8 1785.8 523.8H1787M1792.2 510.8H1795Q1796.2 510.8 1796.2 512V513.6" fill="none" stroke="#2e2e2e" stroke-width="1"/><path d="M1788.2 512V510.6Q1788.2 509.4 1790.2 509.2Q1792.2 509.4 1792.2 510.6V512Z" fill="none" stroke="#2e2e2e" stroke-width="1"/><rect x="1787.5" y="514.4" width="9.2" height="10.2" fill="none" stroke="#2e2e2e" stroke-width="1"/><path d="M1789.2 516.5H1795M1789.2 518.6H1795M1789.2 520.7H1792.4" stroke="#2e2e2e" stroke-width="1"/><path d="M1795.6 570.6999999999999L1797.6 572.3" stroke="#000" stroke-width="2.8" stroke-linecap="round"/><ellipse cx="1790.5" cy="565.3" rx="7" ry="6.8" fill="url(#gZl)" stroke="#111" stroke-width="1.15"/><rect x="1786.4" y="562.4" width="8.4" height="5.9" fill="#fff" stroke="#000" stroke-width="1.2" stroke-dasharray="1 .95"/><path d="M1795.6 605.9L1797.6 607.5" stroke="#000" stroke-width="2.8" stroke-linecap="round"/><ellipse cx="1790.5" cy="600.5" rx="7" ry="6.8" fill="url(#gZl)" stroke="#111" stroke-width="1.15"/><rect x="1787" y="596.8" width="4.2" height="4" fill="url(#gZy)" stroke="#000" stroke-width="1.1"/><rect x="1790.2" y="599.8" width="4.4" height="4.2" fill="url(#gZy)" stroke="#000" stroke-width="1.1"/><path d="M1795.6 640.6999999999999L1797.6 642.3" stroke="#000" stroke-width="2.8" stroke-linecap="round"/><ellipse cx="1790.5" cy="635.3" rx="7" ry="6.8" fill="url(#gZl)" stroke="#111" stroke-width="1.15"/><rect x="1787.8" y="631.6" width="5.6" height="7.4" fill="url(#gZp)" stroke="#000" stroke-width="1.3"/><rect x="1786.9" y="665" width="8" height="11.6" fill="url(#gZp)" stroke="#b4b4b4" stroke-width=".9"/><path d="M1785 663.2H1787.8L1785 666ZM1797 663.2H1794.2L1797 666ZM1785 679H1787.8L1785 676.2ZM1797 679H1794.2L1797 676.2Z" fill="#000"/><rect x="1784" y="712.7" width="8.4" height="8.4" fill="#fff" stroke="#1e1e1e" stroke-width="1.4"/><rect x="1785.4" y="714.1" width="5.6" height="5.6" fill="url(#gDup)"/><rect x="1786.9" y="715.7" width="11.4" height="11.4" fill="#fff" stroke="#1e1e1e" stroke-width="1.4"/><rect x="1788.5" y="717.3" width="8.2" height="8.2" fill="url(#gDup)"/><rect x="1784" y="747.7" width="8.4" height="8.4" fill="#fff" stroke="#1e1e1e" stroke-width="1.4"/><rect x="1785.4" y="749.1" width="5.6" height="5.6" fill="url(#gDup)"/><rect x="1786.9" y="750.7" width="11.4" height="11.4" fill="#fff" stroke="#1e1e1e" stroke-width="1.4"/><rect x="1788.5" y="752.3" width="8.2" height="8.2" fill="url(#gDup)"/><path d="M1790.5 755.6V754.4Q1790.5 752.8 1792.4 752.8Q1794.4 752.8 1794.4 754.4V755.6" fill="none" stroke="#000" stroke-width="1.2"/><rect x="1789.5" y="755.7" width="6" height="3.7" fill="url(#gLkY)" stroke="#000" stroke-width="1"/><rect x="1784" y="782.7" width="8.4" height="8.4" fill="#fff" stroke="#1e1e1e" stroke-width="1.4"/><rect x="1785.4" y="784.1" width="5.6" height="5.6" fill="url(#gDup)"/><rect x="1786.9" y="785.7" width="11.4" height="11.4" fill="#fff" stroke="#1e1e1e" stroke-width="1.4"/><rect x="1788.5" y="787.3" width="8.2" height="8.2" fill="url(#gDup)"/><path d="M1791 788.6Q1791.6 787 1793.2 787.4Q1794.8 787.8 1794.6 790" fill="none" stroke="#000" stroke-width="1.2"/><rect x="1789.5" y="790.6" width="6" height="3.7" fill="url(#gLkG)" stroke="#000" stroke-width="1"/><rect x="1785.6" y="837.6" width="8.8" height="6.6" fill="url(#gGrp)" stroke="#1e1e1e" stroke-width="1.2"/><circle cx="1793.7" cy="836" r="3.9" fill="url(#gGrp)" stroke="#1e1e1e" stroke-width="1.1"/><rect x="1783.0" y="831.0" width="2" height="2" fill="#000"/><rect x="1797.0" y="831.0" width="2" height="2" fill="#000"/><rect x="1783.0" y="844.9" width="2" height="2" fill="#000"/><rect x="1797.0" y="844.9" width="2" height="2" fill="#000"/><rect x="1785.6" y="872.9" width="8.6" height="6.3" fill="url(#gUng)" stroke="#1e1e1e" stroke-width="1.2"/><circle cx="1793.7" cy="871.1" r="3.9" fill="url(#gGrp)" stroke="#1e1e1e" stroke-width="1.1"/><rect x="1783.0" y="870.1" width="2" height="2" fill="#000"/><rect x="1783.0" y="880.0" width="2" height="2" fill="#000"/><rect x="1795.2" y="880.0" width="2" height="2" fill="#000"/><rect x="1788.2" y="874.9" width="2" height="2" fill="#000"/><rect x="1788.2" y="866.0" width="2" height="2" fill="#000"/><rect x="1797.2" y="866.0" width="2" height="2" fill="#000"/><rect x="1797.2" y="874.9" width="2" height="2" fill="#000"/><rect x="1783.4" y="915.4" width="15.4" height="15" fill="#fff"/><rect x="1783" y="915" width="16" height="1.8" fill="url(#gFsT)"/><rect x="1783" y="915" width="1.8" height="15.6" fill="url(#gFsL)"/><path d="M1783.4 930.4C1786 925.6 1789.6 923.2 1792.6 922.6L1793.8 924.2C1792.4 927 1788.6 929.6 1783.4 930.4Z" fill="#000"/><path d="M1792.8 923L1796.4 919.6" stroke="#222" stroke-width="2.2"/><path d="M1795.6 918.6L1799 916.6V922.6L1797.4 921.4Z" fill="#ffb000"/><path d="M1787 928L1791.6 924.4" stroke="#aaa" stroke-width=".7"/><path d="M1831.8 122L1837 126.8" stroke="#000" stroke-width="1.3"/><path d="M1838.4 128.2L1834.2 127.4L1837.4 124.2Z" fill="#000"/><path d="M1829.9 117.4L1832.5 120L1829.9 122.6L1827.3000000000002 120Z" fill="#c8c8f4" stroke="#2c2cff" stroke-width="1.5" stroke-linejoin="miter"/><path d="M1839.9 127.5L1842.5 130.1L1839.9 132.7L1837.3000000000002 130.1Z" fill="#c8c8f4" stroke="#2a8a2a" stroke-width="1.5" stroke-linejoin="miter"/><path d="M1831.8 170.9L1837 175.70000000000002" stroke="#000" stroke-width="1.3"/><path d="M1838.4 177.1L1834.2 176.3L1837.4 173.1Z" fill="#000"/><path d="M1829.9 166.3L1832.5 168.9L1829.9 171.5L1827.3000000000002 168.9Z" fill="#c8c8f4" stroke="#2c2cff" stroke-width="1.5" stroke-linejoin="miter"/><path d="M1839.9 176.4L1842.5 179.0L1839.9 181.6L1837.3000000000002 179.0Z" fill="#c8c8f4" stroke="#2a8a2a" stroke-width="1.5" stroke-linejoin="miter"/><path d="M1831.8 360L1837 364.8" stroke="#000" stroke-width="1.3"/><path d="M1838.4 366.2L1834.2 365.4L1837.4 362.2Z" fill="#000"/><path d="M1829.9 355.4L1832.5 358L1829.9 360.6L1827.3000000000002 358Z" fill="#c8c8f4" stroke="#2c2cff" stroke-width="1.5" stroke-linejoin="miter"/><path d="M1839.9 365.5L1842.5 368.1L1839.9 370.70000000000005L1837.3000000000002 368.1Z" fill="#c8c8f4" stroke="#2a8a2a" stroke-width="1.5" stroke-linejoin="miter"/><path d="M1831.8 584L1837 588.8" stroke="#000" stroke-width="1.3"/><path d="M1838.4 590.2L1834.2 589.4L1837.4 586.2Z" fill="#000"/><path d="M1829.9 579.4L1832.5 582L1829.9 584.6L1827.3000000000002 582Z" fill="#c8c8f4" stroke="#2c2cff" stroke-width="1.5" stroke-linejoin="miter"/><path d="M1839.9 589.5L1842.5 592.1L1839.9 594.7L1837.3000000000002 592.1Z" fill="#c8c8f4" stroke="#2a8a2a" stroke-width="1.5" stroke-linejoin="miter"/><rect x="1839.6" y="213.6" width="1.2" height="1.2" fill="#cfe8cf"/><rect x="1839.6" y="210.6" width="1.2" height="1.2" fill="#cfe8cf"/><rect x="1839.6" y="207.6" width="1.2" height="1.2" fill="#cfe8cf"/><rect x="1839.6" y="204.6" width="1.2" height="1.2" fill="#cfe8cf"/><rect x="1839.6" y="201.6" width="1.2" height="1.2" fill="#cfe8cf"/><rect x="1836.6" y="213.6" width="1.2" height="1.2" fill="#cfe8cf"/><rect x="1833.6" y="213.6" width="1.2" height="1.2" fill="#cfe8cf"/><rect x="1830.6" y="213.6" width="1.2" height="1.2" fill="#cfe8cf"/><rect x="1827.6" y="213.6" width="1.2" height="1.2" fill="#cfe8cf"/><rect x="1839.6" y="248.6" width="1.2" height="1.2" fill="#d6d6d6"/><rect x="1839.6" y="245.6" width="1.2" height="1.2" fill="#d6d6d6"/><rect x="1839.6" y="242.6" width="1.2" height="1.2" fill="#d6d6d6"/><rect x="1839.6" y="239.6" width="1.2" height="1.2" fill="#d6d6d6"/><rect x="1839.6" y="236.6" width="1.2" height="1.2" fill="#d6d6d6"/><rect x="1836.6" y="248.6" width="1.2" height="1.2" fill="#d6d6d6"/><rect x="1833.6" y="248.6" width="1.2" height="1.2" fill="#d6d6d6"/><rect x="1830.6" y="248.6" width="1.2" height="1.2" fill="#d6d6d6"/><rect x="1827.6" y="248.6" width="1.2" height="1.2" fill="#d6d6d6"/><path d="M1840.2 246.79999999999998L1842.6000000000001 249.2L1840.2 251.6L1837.8 249.2Z" fill="#e6e6f2" stroke="#c8e4c8" stroke-width="1.1" stroke-linejoin="miter"/><rect x="1839.6" y="283.3" width="1.2" height="1.2" fill="#d6d6d6"/><rect x="1839.6" y="280.3" width="1.2" height="1.2" fill="#d6d6d6"/><rect x="1839.6" y="277.3" width="1.2" height="1.2" fill="#d6d6d6"/><rect x="1839.6" y="274.3" width="1.2" height="1.2" fill="#d6d6d6"/><rect x="1839.6" y="271.3" width="1.2" height="1.2" fill="#d6d6d6"/><rect x="1836.6" y="283.3" width="1.2" height="1.2" fill="#d6d6d6"/><rect x="1833.6" y="283.3" width="1.2" height="1.2" fill="#d6d6d6"/><rect x="1830.6" y="283.3" width="1.2" height="1.2" fill="#d6d6d6"/><rect x="1827.6" y="283.3" width="1.2" height="1.2" fill="#d6d6d6"/><path d="M1840.2 273.2L1842.4 275.4L1840.2 277.59999999999997L1838.0 275.4Z" fill="#e6e6f2" stroke="#c8e4c8" stroke-width="1.1" stroke-linejoin="miter"/><rect x="1839.6" y="318.4" width="1.2" height="1.2" fill="#d6d6d6"/><rect x="1839.6" y="315.4" width="1.2" height="1.2" fill="#d6d6d6"/><rect x="1839.6" y="312.4" width="1.2" height="1.2" fill="#d6d6d6"/><rect x="1839.6" y="309.4" width="1.2" height="1.2" fill="#d6d6d6"/><rect x="1839.6" y="306.4" width="1.2" height="1.2" fill="#d6d6d6"/><rect x="1836.6" y="318.4" width="1.2" height="1.2" fill="#d6d6d6"/><rect x="1833.6" y="318.4" width="1.2" height="1.2" fill="#d6d6d6"/><rect x="1830.6" y="318.4" width="1.2" height="1.2" fill="#d6d6d6"/><rect x="1827.6" y="318.4" width="1.2" height="1.2" fill="#d6d6d6"/><circle cx="1831" cy="310.4" r="1.9" fill="#f0f0f6" stroke="#c4e2c4" stroke-width="1.1"/><path d="M1827.6 391.6C1832 392.20000000000005 1837.4 395.20000000000005 1837.8 399.8C1837.9 401.6 1836.6 403.20000000000005 1835.2 404.0C1838.4 404.20000000000005 1841.4 402.6 1842.3 399.0" fill="none" stroke="#1c7c1c" stroke-width="1.7" stroke-linecap="round"/><path d="M1827.9 434.5L1842.2 430.7" stroke="#777" stroke-width="1"/><path d="M1827.9 439.9L1842.2 425.9" stroke="#333" stroke-width="1.1"/><circle cx="1834.9" cy="432.9" r="2" fill="#9a8ae0" stroke="#1e8a1e" stroke-width="1.3"/><path d="M1827.6 460.4C1832 461.0 1837.4 464.0 1837.8 468.59999999999997C1837.9 470.4 1836.6 472.0 1835.2 472.79999999999995C1838.4 473.0 1841.4 471.4 1842.3 467.79999999999995" fill="none" stroke="#444" stroke-width="1" stroke-linecap="round"/><path d="M1834.9 470.5L1837.4 473L1834.9 475.5L1832.4 473Z" fill="#a89af0" stroke="#2a8a2a" stroke-width="1.4" stroke-linejoin="miter"/><path d="M1827.6 495.6C1832 496.20000000000005 1837.4 499.20000000000005 1837.8 503.8C1837.9 505.6 1836.6 507.20000000000005 1835.2 508.0C1838.4 508.20000000000005 1841.4 506.6 1842.3 503.0" fill="none" stroke="#444" stroke-width="1" stroke-linecap="round"/><rect x="1832.2" y="496" width="4.6" height="4.6" fill="#a89af0" stroke="#2a8a2a" stroke-width="1.4"/><path d="M1828.1 544.7L1842.2 531.1" stroke="#555" stroke-width="1"/><path d="M1829.2 545.8L1831 540.6M1831.2 544.2L1833 539M1837.4 537L1839.2 531.8M1839.4 535.4L1841.2 530.2" stroke="#d40000" stroke-width="1.1"/><circle cx="1834.9" cy="537.9" r="1.9" fill="#9a8ae0" stroke="#1e8a1e" stroke-width="1.3"/><path d="M1840 614.2V626.9H1827.2" fill="none" stroke="#a6a6a6" stroke-width="1.5"/><circle cx="1832.5" cy="619.6" r="1.9" fill="#b4b4f0" stroke="#2a9a2a" stroke-width="1.3"/><path d="M1840 649.8V662.4" stroke="#555" stroke-width="1.2" stroke-dasharray="1.1 1.1"/><path d="M1827.2 661.9H1840.4" stroke="#555" stroke-width="1.2" stroke-dasharray="1.2 1"/><path d="M1829 654.5H1836M1832.5 651V658" stroke="#000" stroke-width="1"/><text x="1830.9" y="696.2" font-size="17" font-weight="700" fill="#000" stroke="#000" stroke-width=".5" textLength="12.2" lengthAdjust="spacingAndGlyphs">A</text><path d="M1831.5 696.6H1842.6" stroke="#2a9a2a" stroke-width="1"/><path d="M1829.6 694.5L1831.8 696.7L1829.6 698.9000000000001L1827.3999999999999 696.7Z" fill="#a89af0" stroke="#2a8a2a" stroke-width="1.2" stroke-linejoin="miter"/><rect x="1829.8" y="734.2" width="10.4" height="13.6" rx="1.2" fill="url(#gPb)" stroke="#333" stroke-width="1.4"/><path d="M1828.3 767.9V784M1832.4 767.9V784M1836.6 767.9V784M1840.7 767.9V784M1827 769.9H1842.8M1827 774.1H1842.8M1827 778.2H1842.8M1827 782.3H1842.8" stroke="#0000ff" stroke-width="1.3" fill="none"/><path d="M1828.4 803V818.4M1833.4 818.4L1838.7 803M1840.6 803V818.4" stroke="#0000ff" stroke-width="1.3" fill="none"/></svg><svg style="left:1320px;top:100px;" width="360" height="420" viewBox="1320 100 360 420"><path d="M1325.6 113.8H1333.4L1337.6 117.8V128.6H1325.6Z" fill="url(#gPage)" stroke="#8c8c86" stroke-width="1"/><rect x="1326.6" y="114.8" width="5" height="2.4" fill="#e8cdbe"/><path d="M1326.6 118.6H1331M1326.6 120.4H1330" stroke="#c4ccc0" stroke-width=".7"/><path d="M1328.4 119.4H1334.4V117L1339.8 121.4L1334.4 125.8V123.6H1328.4Z" fill="#da6cda" stroke="#c234c2" stroke-width=".8" stroke-linejoin="round"/><path d="M1654.6 490.2Q1654.6 488.6 1656.2 488.6H1661.4L1663 490H1668.4Q1670 490 1670 491.6V493H1654.6Z" fill="url(#gFoldT)"/><rect x="1654.4" y="490.8" width="15.8" height="11.8" rx="1.8" fill="url(#gFold)"/></svg><svg width="0" height="0" style="left:0;top:0"><defs><linearGradient id="gLay" x1="0" y1="0" x2="1" y2="1" gradientUnits="objectBoundingBox"><stop offset="0" stop-color="#ffffff"/><stop offset="1" stop-color="#9a9a9a"/></linearGradient><linearGradient id="gLockY" x1="0" y1="0" x2="1" y2="0.8" gradientUnits="objectBoundingBox"><stop offset="0" stop-color="#ffffff"/><stop offset="0.45" stop-color="#fffbd0"/><stop offset="1" stop-color="#ffe24a"/></linearGradient><linearGradient id="gT1" x1="0" y1="0" x2="1" y2="0" gradientUnits="objectBoundingBox"><stop offset="0" stop-color="#333"/><stop offset="1" stop-color="#000"/></linearGradient><linearGradient id="gT3" x1="0" y1="0" x2="1" y2="1" gradientUnits="objectBoundingBox"><stop offset="0" stop-color="#c4d8ec"/><stop offset="1" stop-color="#6a9ac8"/></linearGradient><linearGradient id="gRect" x1="0" y1="0" x2="1" y2="1" gradientUnits="objectBoundingBox"><stop offset="0" stop-color="#f4f7fb"/><stop offset="1" stop-color="#85a6c8"/></linearGradient><linearGradient id="gEll" x1="0" y1="0" x2="1" y2="1" gradientUnits="objectBoundingBox"><stop offset="0" stop-color="#fff6f6"/><stop offset="1" stop-color="#ffa4ac"/></linearGradient><linearGradient id="gStar" x1="0" y1="0" x2="1" y2="1" gradientUnits="objectBoundingBox"><stop offset="0" stop-color="#fffbd0"/><stop offset="1" stop-color="#efdc6c"/></linearGradient><linearGradient id="gBoxL" x1="0" y1="0" x2="0.3" y2="1" gradientUnits="objectBoundingBox"><stop offset="0" stop-color="#cfcff2"/><stop offset="1" stop-color="#8787c8"/></linearGradient><linearGradient id="gBoxR" x1="0" y1="0" x2="1" y2="1" gradientUnits="objectBoundingBox"><stop offset="0" stop-color="#f0f0ff"/><stop offset="1" stop-color="#c4c4ee"/></linearGradient><linearGradient id="gBoxB" x1="0.5" y1="0" x2="0.2" y2="1" gradientUnits="objectBoundingBox"><stop offset="0" stop-color="#23236e"/><stop offset="1" stop-color="#7878c4"/></linearGradient><linearGradient id="gPenB" x1="0" y1="0.2" x2="1" y2="0.6" gradientUnits="objectBoundingBox"><stop offset="0" stop-color="#d0f4fa"/><stop offset="0.35" stop-color="#9cd0e4"/><stop offset="1" stop-color="#3474b4"/></linearGradient><linearGradient id="gPenY" x1="0" y1="0" x2="1" y2="0.6" gradientUnits="objectBoundingBox"><stop offset="0" stop-color="#fffbe0"/><stop offset="1" stop-color="#ffbc18"/></linearGradient><linearGradient id="gPcl" x1="0" y1="0.3" x2="1" y2="0.5" gradientUnits="objectBoundingBox"><stop offset="0" stop-color="#ffff30"/><stop offset="0.45" stop-color="#ffd820"/><stop offset="1" stop-color="#ff9a18"/></linearGradient><linearGradient id="gPclW" x1="0" y1="0" x2="1" y2="1" gradientUnits="objectBoundingBox"><stop offset="0" stop-color="#ffffff"/><stop offset="0.45" stop-color="#fff4d0"/><stop offset="1" stop-color="#ffc020"/></linearGradient><linearGradient id="gNib" x1="0" y1="0" x2="1" y2="1" gradientUnits="objectBoundingBox"><stop offset="0" stop-color="#ffffff"/><stop offset="0.35" stop-color="#fff0a0"/><stop offset="1" stop-color="#ffb818"/></linearGradient><linearGradient id="gHold" x1="0" y1="0" x2="1" y2="0.3" gradientUnits="objectBoundingBox"><stop offset="0" stop-color="#c4e6f4"/><stop offset="0.5" stop-color="#6aa8d0"/><stop offset="1" stop-color="#2f6aa4"/></linearGradient><linearGradient id="gGrad" x1="0" y1="0" x2="1" y2="1" gradientUnits="objectBoundingBox"><stop offset="0" stop-color="#58b058"/><stop offset="0.12" stop-color="#8fd08f"/><stop offset="0.38" stop-color="#ffffff"/><stop offset="1" stop-color="#3fa03f"/></linearGradient><linearGradient id="gMesh" x1="0" y1="0" x2="1" y2="1" gradientUnits="objectBoundingBox"><stop offset="0" stop-color="#82b0e0"/><stop offset="1" stop-color="#5cb86c"/></linearGradient><linearGradient id="gDrop" x1="0" y1="0" x2="1" y2="1" gradientUnits="objectBoundingBox"><stop offset="0" stop-color="#dfeaf8"/><stop offset="1" stop-color="#4a7ec8"/></linearGradient><linearGradient id="gBuck" x1="0.3" y1="0" x2="0.7" y2="1" gradientUnits="objectBoundingBox"><stop offset="0" stop-color="#b8dcec"/><stop offset="1" stop-color="#2f68a4"/></linearGradient><linearGradient id="gGreen" x1="0" y1="0" x2="1" y2="1" gradientUnits="objectBoundingBox"><stop offset="0" stop-color="#c8f0c8"/><stop offset="1" stop-color="#4cae4c"/></linearGradient><radialGradient id="gPud" cx="0.5" cy="0.5" r="0.5"><stop offset="0" stop-color="#d8f8d8"/><stop offset="0.7" stop-color="#8fd89a"/><stop offset="1" stop-color="#3f9f4f"/></radialGradient><linearGradient id="gTwk" x1="0" y1="0" x2="0" y2="1" gradientUnits="objectBoundingBox"><stop offset="0" stop-color="#4a4a4a"/><stop offset="0.5" stop-color="#8c8c8c"/><stop offset="0.9" stop-color="#c0c0c0"/><stop offset="1" stop-color="#b0b0b0"/></linearGradient><linearGradient id="gSpr" x1="0" y1="0" x2="1" y2="0" gradientUnits="objectBoundingBox"><stop offset="0" stop-color="#2e8a10"/><stop offset="0.5" stop-color="#86d840"/><stop offset="0.75" stop-color="#5ab828"/><stop offset="1" stop-color="#2e8a10"/></linearGradient><linearGradient id="gSprY" x1="0" y1="0" x2="1" y2="0" gradientUnits="objectBoundingBox"><stop offset="0" stop-color="#f0a000"/><stop offset="0.5" stop-color="#fff080"/><stop offset="1" stop-color="#f0a000"/></linearGradient><linearGradient id="gErP" x1="0.3" y1="0" x2="0.7" y2="1" gradientUnits="objectBoundingBox"><stop offset="0" stop-color="#fbdcc8"/><stop offset="1" stop-color="#ee9a70"/></linearGradient><linearGradient id="gErB" x1="0.3" y1="0" x2="0.7" y2="1" gradientUnits="objectBoundingBox"><stop offset="0" stop-color="#7070ff"/><stop offset="1" stop-color="#0000f0"/></linearGradient><linearGradient id="gCon" x1="0" y1="0" x2="1" y2="1" gradientUnits="objectBoundingBox"><stop offset="0" stop-color="#d6e4f2"/><stop offset="1" stop-color="#94b4d6"/></linearGradient><linearGradient id="gConY" x1="0" y1="0" x2="0" y2="1" gradientUnits="objectBoundingBox"><stop offset="0" stop-color="#ffe040"/><stop offset="1" stop-color="#f0a800"/></linearGradient><linearGradient id="gLens" x1="0" y1="0" x2="1" y2="1" gradientUnits="objectBoundingBox"><stop offset="0" stop-color="#f6fafe"/><stop offset="1" stop-color="#b8cee6"/></linearGradient><linearGradient id="gHan" x1="0" y1="0" x2="1" y2="1" gradientUnits="objectBoundingBox"><stop offset="0" stop-color="#ffc040"/><stop offset="0.5" stop-color="#ffa810"/><stop offset="1" stop-color="#d87800"/></linearGradient><linearGradient id="gMeas" x1="0" y1="0" x2="1" y2="0.6" gradientUnits="objectBoundingBox"><stop offset="0" stop-color="#fff0ea"/><stop offset="1" stop-color="#f2ae94"/></linearGradient><linearGradient id="gLk" x1="0" y1="0" x2="0.7" y2="1" gradientUnits="objectBoundingBox"><stop offset="0" stop-color="#ff9418"/><stop offset="0.45" stop-color="#ffd040"/><stop offset="1" stop-color="#fff080"/></linearGradient><linearGradient id="gPage" x1="0" y1="0" x2="0" y2="1" gradientUnits="objectBoundingBox"><stop offset="0" stop-color="#f6f6f6"/><stop offset="1" stop-color="#d8d8d8"/></linearGradient><linearGradient id="gPlus" x1="0" y1="0" x2="0" y2="1" gradientUnits="objectBoundingBox"><stop offset="0" stop-color="#c8e060"/><stop offset="1" stop-color="#78a818"/></linearGradient><linearGradient id="gOpen" x1="0" y1="0" x2="0" y2="1" gradientUnits="objectBoundingBox"><stop offset="0" stop-color="#f9b878"/><stop offset="0.15" stop-color="#f49058"/><stop offset="1" stop-color="#e4481a"/></linearGradient><linearGradient id="gDrive" x1="0" y1="0" x2="0" y2="1" gradientUnits="objectBoundingBox"><stop offset="0" stop-color="#ececec"/><stop offset="1" stop-color="#bdbdbd"/></linearGradient><linearGradient id="gDrvF" x1="0" y1="0" x2="0" y2="1" gradientUnits="objectBoundingBox"><stop offset="0" stop-color="#2a2a2a"/><stop offset="0.6" stop-color="#555"/><stop offset="1" stop-color="#9a9a9a"/></linearGradient><linearGradient id="gSavA" x1="0" y1="0" x2="0" y2="1" gradientUnits="objectBoundingBox"><stop offset="0" stop-color="#d4e890"/><stop offset="1" stop-color="#98c840"/></linearGradient><linearGradient id="gImpA" x1="0" y1="0" x2="1" y2="0" gradientUnits="objectBoundingBox"><stop offset="0" stop-color="#a8c8ec"/><stop offset="1" stop-color="#4a8cd0"/></linearGradient><linearGradient id="gImpF" x1="0" y1="0" x2="1" y2="0" gradientUnits="objectBoundingBox"><stop offset="0" stop-color="#78aee0"/><stop offset="1" stop-color="#78aee0"/></linearGradient><linearGradient id="gFadeB" x1="0" y1="0" x2="1" y2="0"><stop offset="0" stop-color="#6aa6de" stop-opacity=".15"/><stop offset=".5" stop-color="#6aa6de" stop-opacity="1"/><stop offset="1" stop-color="#7ab4e8"/></linearGradient><linearGradient id="gFadeM" x1="0" y1="0" x2="1" y2="0"><stop offset="0" stop-color="#dc78dc" stop-opacity=".15"/><stop offset=".45" stop-color="#d868d8" stop-opacity="1"/><stop offset="1" stop-color="#e088e0"/></linearGradient><linearGradient id="gZl" x1="0" y1="0" x2="0" y2="1" gradientUnits="objectBoundingBox"><stop offset="0" stop-color="#f4f8fc"/><stop offset="1" stop-color="#a8c4e2"/></linearGradient><linearGradient id="gZy" x1="0" y1="0" x2="0" y2="1" gradientUnits="objectBoundingBox"><stop offset="0" stop-color="#fffbe0"/><stop offset="1" stop-color="#ffd030"/></linearGradient><linearGradient id="gZp" x1="0" y1="0" x2="1" y2="1" gradientUnits="objectBoundingBox"><stop offset="0" stop-color="#ffffff"/><stop offset="1" stop-color="#bcbcbc"/></linearGradient><linearGradient id="gDup" x1="0" y1="0" x2="1" y2="1" gradientUnits="objectBoundingBox"><stop offset="0" stop-color="#9ab6d4"/><stop offset="1" stop-color="#eef3f9"/></linearGradient><linearGradient id="gLkY" x1="0" y1="0" x2="0" y2="1" gradientUnits="objectBoundingBox"><stop offset="0" stop-color="#ffffff"/><stop offset="1" stop-color="#ffb800"/></linearGradient><linearGradient id="gLkG" x1="0" y1="0" x2="0" y2="1" gradientUnits="objectBoundingBox"><stop offset="0" stop-color="#ffffff"/><stop offset="1" stop-color="#3a9a18"/></linearGradient><linearGradient id="gGrp" x1="0" y1="0" x2="1" y2="1" gradientUnits="objectBoundingBox"><stop offset="0" stop-color="#eaf1f8"/><stop offset="1" stop-color="#a4c0dc"/></linearGradient><linearGradient id="gUng" x1="0" y1="0" x2="0" y2="1" gradientUnits="objectBoundingBox"><stop offset="0" stop-color="#fff4b0"/><stop offset="1" stop-color="#ffc418"/></linearGradient><linearGradient id="gFsT" x1="0" y1="0" x2="1" y2="0"><stop offset="0" stop-color="#000"/><stop offset=".6" stop-color="#000"/><stop offset="1" stop-color="#000" stop-opacity=".1"/></linearGradient><linearGradient id="gFsL" x1="0" y1="0" x2="0" y2="1"><stop offset="0" stop-color="#000"/><stop offset=".6" stop-color="#000"/><stop offset="1" stop-color="#000" stop-opacity=".1"/></linearGradient><linearGradient id="gPb" x1="0" y1="0" x2="1" y2="1" gradientUnits="objectBoundingBox"><stop offset="0" stop-color="#ffffff"/><stop offset="0.4" stop-color="#f0f0f0"/><stop offset="1" stop-color="#a4a4a4"/></linearGradient><linearGradient id="gFold" x1="0" y1="0" x2="0" y2="1" gradientUnits="objectBoundingBox"><stop offset="0" stop-color="#7a7a7a"/><stop offset="1" stop-color="#5e5e5e"/></linearGradient><linearGradient id="gFoldT" x1="0" y1="0" x2="1" y2="0" gradientUnits="objectBoundingBox"><stop offset="0" stop-color="#b03a48"/><stop offset="1" stop-color="#8a5a50"/></linearGradient></defs></svg></div></body></html>
